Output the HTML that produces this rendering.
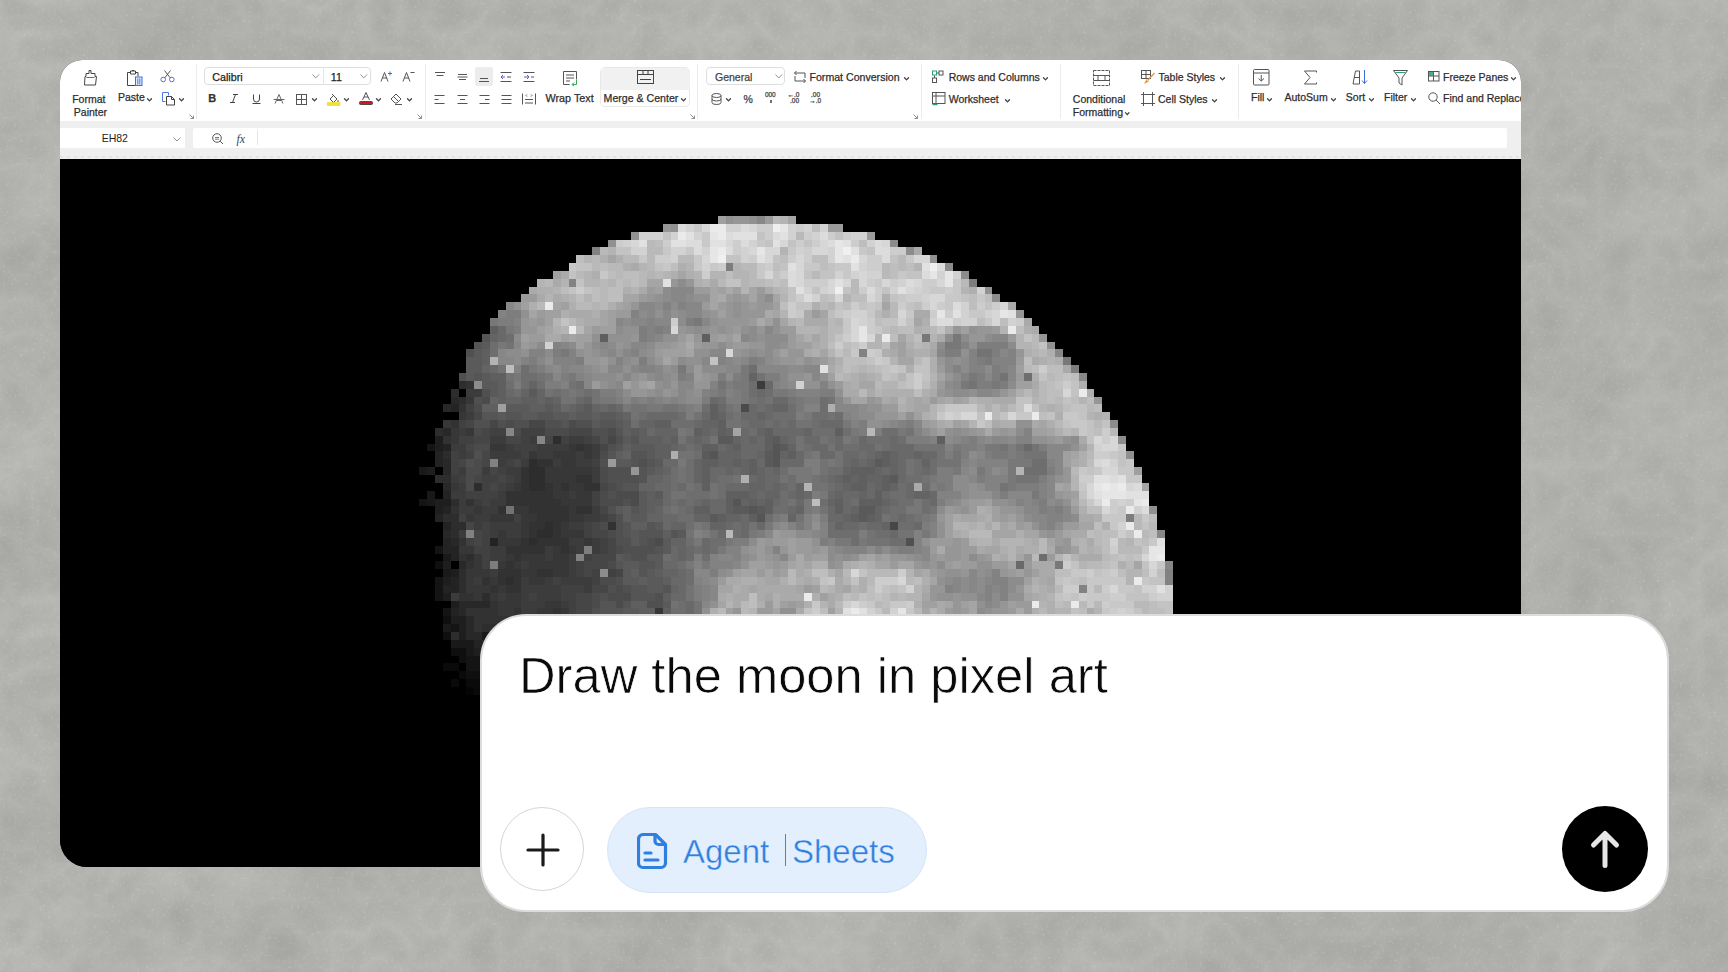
<!DOCTYPE html>
<html><head><meta charset="utf-8">
<style>
html,body{margin:0;padding:0;}
body{width:1728px;height:972px;overflow:hidden;position:relative;background:#b0b0ad;font-family:"Liberation Sans",sans-serif;}
#bg{position:absolute;left:0;top:0;width:1728px;height:972px;}
#win{position:absolute;left:60px;top:60px;width:1461px;height:807px;border-radius:22px 22px 27px 27px;overflow:hidden;background:#000;}
#ribbon{position:absolute;left:0;top:0;width:1461px;height:61px;background:#fff;}
#fbar{position:absolute;left:0;top:61px;width:1461px;height:38px;background:#efefef;}
#namebox{position:absolute;left:0;top:7px;width:125px;height:20px;background:#fff;}
#fbox{position:absolute;left:133px;top:7px;width:1314px;height:20px;border-radius:2px;background:#fff;}
#sheet{position:absolute;left:0;top:99px;width:1461px;height:708px;background:#000;}
#chat{position:absolute;left:480px;top:614px;width:1185px;height:294px;border:2px solid #dcdcdc;border-radius:46px;background:#fff;}
#prompt{position:absolute;left:37px;top:30.3px;font-size:50.7px;color:#0a0a0a;white-space:nowrap;-webkit-text-stroke:0.7px #fff;}
#plus{position:absolute;left:18px;top:191px;width:84px;height:84px;border:1px solid #d6d6d6;border-radius:50%;box-sizing:border-box;}
#pill{position:absolute;left:125px;top:191px;width:320px;height:86px;border-radius:43px;background:#e3effc;border:1px solid #d5e5f8;box-sizing:border-box;}
.t{position:absolute;white-space:nowrap;font-family:"Liberation Sans",sans-serif;}
#ribbon .t{-webkit-text-stroke:0.25px currentColor;}
.ic{position:absolute;overflow:visible;}
.sep{position:absolute;width:1px;background:#ececec;}
.box{position:absolute;box-sizing:border-box;}
#send{position:absolute;left:1080px;top:190px;width:86px;height:86px;border-radius:50%;background:#000;}
</style></head><body>
<svg id="bg" width="1728" height="972"><defs><filter id="cn" x="0" y="0" width="100%" height="100%" color-interpolation-filters="sRGB"><feTurbulence type="fractalNoise" baseFrequency="0.008 0.01" numOctaves="6" seed="11" result="n"/><feColorMatrix in="n" type="matrix" values="0.08 0 0 0 0.664  0.08 0 0 0 0.664  0.08 0 0 0 0.65  0 0 0 0 1"/></filter><filter id="cn2" x="0" y="0" width="100%" height="100%" color-interpolation-filters="sRGB"><feTurbulence type="turbulence" baseFrequency="0.03" numOctaves="3" seed="5" result="n"/><feColorMatrix in="n" type="matrix" values="0 0 0 0 0.555  0 0 0 0 0.555  0 0 0 0 0.54  0.35 0 0 0 -0.02"/></filter><filter id="gr" x="0" y="0" width="100%" height="100%" color-interpolation-filters="sRGB"><feTurbulence type="fractalNoise" baseFrequency="0.35" numOctaves="2" seed="3" result="n"/><feColorMatrix in="n" type="matrix" values="0 0 0 0 0.85  0 0 0 0 0.85  0 0 0 0 0.84  1.0 0 0 0 -0.6"/></filter></defs><rect width="1728" height="972" filter="url(#cn)"/><rect width="1728" height="972" filter="url(#cn2)"/><rect width="1728" height="972" filter="url(#gr)"/></svg>
<div id="win">
  <div id="ribbon">
<svg class="ic" style="left:22.0px;top:9.0px" width="16" height="17" viewBox="0 0 16 17" fill="none" stroke="#4a4a4a" stroke-width="1"><path d="M7 1.5 h2 v3 h4 v3 h1.5 l-1 8.5 h-11 l0.5 -8.5 h1 v-3 h3z" stroke="#444"/><path d="M4.5 8.5 h8" stroke="#d04040" stroke-width="1.2"/></svg>
<div class="t" style="left:12.2px;top:33.6px;font-size:10.5px;line-height:10.5px;color:#2e2e2e;">Format</div>
<div class="t" style="left:13.8px;top:46.9px;font-size:10.5px;line-height:10.5px;color:#2e2e2e;">Painter</div>
<svg class="ic" style="left:66.0px;top:9.0px" width="18" height="17" viewBox="0 0 18 17" fill="none" stroke="#4a4a4a" stroke-width="1"><path d="M4.5 3.5 h-3 v13 h8" stroke="#444"/><path d="M9.5 3.5 h2.5 v4" stroke="#444"/><path d="M4.5 2 h5 v3 h-5z" stroke="#444"/><path d="M6 1.5 h2" stroke="#444"/><rect x="9.5" y="8" width="6.5" height="8.5" stroke="#3b6fd8" fill="#e3eafc"/><path d="M11.8 9.5 v6 M13.8 9.5 v6" stroke="#3b6fd8" stroke-width="0.9"/></svg>
<div class="t" style="left:58.0px;top:32.4px;font-size:10.5px;line-height:10.5px;color:#2e2e2e;">Paste</div>
<svg class="ic" style="left:86.5px;top:38.3px" width="5" height="3.6" viewBox="0 0 5 3.6" fill="none" stroke="#4a4a4a" stroke-width="1"><path d="M0.5 0.7 L2.5 2.9000000000000004 L4.5 0.7" stroke="#444" stroke-width="1.3" stroke-linecap="round" stroke-linejoin="round"/></svg>
<svg class="ic" style="left:100.0px;top:10.0px" width="15" height="13" viewBox="0 0 15 13" fill="none" stroke="#4a4a4a" stroke-width="1"><circle cx="3.2" cy="9.5" r="2.3" stroke="#4a5fd0" stroke-width="0.9"/><circle cx="11.8" cy="9.5" r="2.3" stroke="#4a5fd0" stroke-width="0.9"/><path d="M4.8 7.8 L10.5 0.5 M10.2 7.8 L4.5 0.5" stroke="#444" stroke-width="0.9"/></svg>
<svg class="ic" style="left:101.0px;top:31.0px" width="15" height="15" viewBox="0 0 15 15" fill="none" stroke="#4a4a4a" stroke-width="1"><path d="M1.5 1.5 h6 v3 M1.5 1.5 v9 h3" stroke="#4a7be0"/><path d="M5.5 5.5 h5 l3 3 v5.5 h-8z M10.5 5.5 v3 h3" stroke="#444"/></svg>
<svg class="ic" style="left:119.0px;top:38.3px" width="5" height="3.6" viewBox="0 0 5 3.6" fill="none" stroke="#4a4a4a" stroke-width="1"><path d="M0.5 0.7 L2.5 2.9000000000000004 L4.5 0.7" stroke="#444" stroke-width="1.3" stroke-linecap="round" stroke-linejoin="round"/></svg>
<svg class="ic" style="left:129.0px;top:53.5px" width="5" height="5" viewBox="0 0 5 5" fill="none" stroke="#4a4a4a" stroke-width="1"><path d="M0.5 0.5 L4.5 4.5 M4.5 1.5 V4.5 H1.5" stroke="#777" stroke-width="0.8"/></svg>
<div class="sep" style="left:135.5px;top:4px;height:55px"></div>
<div class="box" style="left:143.7px;top:7.3px;width:167.0px;height:18.0px;border:1px solid #dedede;border-radius:4px;"></div>
<div class="sep" style="left:262.8px;top:8px;height:17px;background:#e6e6e6"></div>
<div class="t" style="left:152.3px;top:11.5px;font-size:10.7px;line-height:10.7px;color:#222;">Calibri</div>
<svg class="ic" style="left:251.5px;top:14.3px" width="7.5" height="4.5" viewBox="0 0 7.5 4.5" fill="none" stroke="#4a4a4a" stroke-width="1"><path d="M0.5 0.5 L3.75 4.0 L7.0 0.5" stroke="#888" stroke-width="0.9"/></svg>
<div class="t" style="left:270.8px;top:11.5px;font-size:10.7px;line-height:10.7px;color:#222;">11</div>
<svg class="ic" style="left:299.5px;top:14.3px" width="7.5" height="4.5" viewBox="0 0 7.5 4.5" fill="none" stroke="#4a4a4a" stroke-width="1"><path d="M0.5 0.5 L3.75 4.0 L7.0 0.5" stroke="#888" stroke-width="0.9"/></svg>
<svg class="ic" style="left:320.0px;top:11.0px" width="13" height="11" viewBox="0 0 13 11" fill="none" stroke="#4a4a4a" stroke-width="1"><path d="M1 10.5 L4.5 1.5 L8 10.5 M2.5 7 h4.5" stroke="#555"/><path d="M10 0.5 v4 M8 2.5 h4" stroke="#3b6fd8"/></svg>
<svg class="ic" style="left:342.0px;top:11.0px" width="13" height="11" viewBox="0 0 13 11" fill="none" stroke="#4a4a4a" stroke-width="1"><path d="M1 10.5 L4.5 1.5 L8 10.5 M2.5 7 h4.5" stroke="#555"/><path d="M8.5 1.5 h4" stroke="#555"/></svg>
<div class="t" style="left:148.3px;top:33.3px;font-size:11px;line-height:11px;color:#333;"><b>B</b></div>
<svg class="ic" style="left:169.0px;top:34.0px" width="10" height="9" viewBox="0 0 10 9" fill="none" stroke="#4a4a4a" stroke-width="1"><path d="M4 0.5 h5 M1 8.5 h5 M6.5 0.5 L3.5 8.5" stroke="#444"/></svg>
<svg class="ic" style="left:192.0px;top:34.0px" width="9" height="10" viewBox="0 0 9 10" fill="none" stroke="#4a4a4a" stroke-width="1"><path d="M1.5 0.5 v4.5 a3 3 0 0 0 6 0 v-4.5 M0.5 9.5 h8" stroke="#444"/></svg>
<svg class="ic" style="left:212.5px;top:34.0px" width="12" height="10" viewBox="0 0 12 10" fill="none" stroke="#4a4a4a" stroke-width="1"><path d="M2 9.5 L6 0.5 L10 9.5 M3.5 6.5 h5 M0.5 5.5 h11" stroke="#666"/></svg>
<svg class="ic" style="left:236.0px;top:33.5px" width="11" height="11" viewBox="0 0 11 11" fill="none" stroke="#4a4a4a" stroke-width="1"><rect x="0.5" y="0.5" width="10" height="10" stroke="#555"/><path d="M5.5 0.5 v10 M0.5 5.5 h10" stroke="#555"/></svg>
<svg class="ic" style="left:252.3px;top:38.1px" width="5" height="3.6" viewBox="0 0 5 3.6" fill="none" stroke="#4a4a4a" stroke-width="1"><path d="M0.5 0.7 L2.5 2.9000000000000004 L4.5 0.7" stroke="#444" stroke-width="1.3" stroke-linecap="round" stroke-linejoin="round"/></svg>
<svg class="ic" style="left:267.0px;top:32.5px" width="14" height="13" viewBox="0 0 14 13" fill="none" stroke="#4a4a4a" stroke-width="1"><path d="M3 6 L6.5 2.5 L10 6 L6.5 9.5z M5 1 L8 4" stroke="#555"/><path d="M11 7 v2" stroke="#555"/><rect x="0.5" y="9.5" width="12.5" height="3" fill="#f2e22a" stroke="#e5d300" stroke-width="0.5"/></svg>
<svg class="ic" style="left:283.5px;top:38.1px" width="5" height="3.6" viewBox="0 0 5 3.6" fill="none" stroke="#4a4a4a" stroke-width="1"><path d="M0.5 0.7 L2.5 2.9000000000000004 L4.5 0.7" stroke="#444" stroke-width="1.3" stroke-linecap="round" stroke-linejoin="round"/></svg>
<svg class="ic" style="left:298.5px;top:32.0px" width="14" height="13" viewBox="0 0 14 13" fill="none" stroke="#4a4a4a" stroke-width="1"><path d="M3.5 8 L7 0.5 L10.5 8 M5 5 h4" stroke="#555"/><rect x="0.5" y="9.5" width="13" height="3" fill="#d3171d" rx="1"/></svg>
<svg class="ic" style="left:315.5px;top:38.1px" width="5" height="3.6" viewBox="0 0 5 3.6" fill="none" stroke="#4a4a4a" stroke-width="1"><path d="M0.5 0.7 L2.5 2.9000000000000004 L4.5 0.7" stroke="#444" stroke-width="1.3" stroke-linecap="round" stroke-linejoin="round"/></svg>
<svg class="ic" style="left:330.0px;top:33.0px" width="13" height="12" viewBox="0 0 13 12" fill="none" stroke="#4a4a4a" stroke-width="1"><path d="M1 6 L6 1 L11 6 L7 10 h-2z M3.5 3.5 L8.5 8.5 M5 11.5 h7" stroke="#555"/></svg>
<svg class="ic" style="left:346.8px;top:38.1px" width="5" height="3.6" viewBox="0 0 5 3.6" fill="none" stroke="#4a4a4a" stroke-width="1"><path d="M0.5 0.7 L2.5 2.9000000000000004 L4.5 0.7" stroke="#444" stroke-width="1.3" stroke-linecap="round" stroke-linejoin="round"/></svg>
<svg class="ic" style="left:356.6px;top:53.5px" width="5" height="5" viewBox="0 0 5 5" fill="none" stroke="#4a4a4a" stroke-width="1"><path d="M0.5 0.5 L4.5 4.5 M4.5 1.5 V4.5 H1.5" stroke="#777" stroke-width="0.8"/></svg>
<div class="sep" style="left:364.5px;top:4px;height:55px"></div>
<svg class="ic" style="left:374.0px;top:11.0px" width="12" height="6" viewBox="0 0 12 6" fill="none" stroke="#4a4a4a" stroke-width="1"><path d="M1 1.5 h10 M2.5 4.5 h7" stroke="#555"/></svg>
<svg class="ic" style="left:396.5px;top:13.0px" width="11" height="8" viewBox="0 0 11 8" fill="none" stroke="#4a4a4a" stroke-width="1"><path d="M1 1.5 h9 M0.5 4 h10 M2 6.5 h7" stroke="#555"/></svg>
<div class="box" style="left:415.0px;top:7.0px;width:18.4px;height:18.5px;background:#ececec;border-radius:2px;"></div>
<svg class="ic" style="left:418.0px;top:16.0px" width="12" height="7" viewBox="0 0 12 7" fill="none" stroke="#4a4a4a" stroke-width="1"><path d="M2 2.5 h8 M1 5.5 h10" stroke="#555"/></svg>
<svg class="ic" style="left:440.0px;top:11.0px" width="12" height="12" viewBox="0 0 12 12" fill="none" stroke="#4a4a4a" stroke-width="1"><path d="M0.5 1.5 h11 M0.5 10.5 h11 M7 6 h4" stroke="#555"/><path d="M5 6 h-4 M3 4 L1 6 L3 8" stroke="#5b5bd8"/></svg>
<svg class="ic" style="left:462.5px;top:11.0px" width="12" height="12" viewBox="0 0 12 12" fill="none" stroke="#4a4a4a" stroke-width="1"><path d="M0.5 1.5 h11 M0.5 10.5 h11 M8 6 h3" stroke="#555"/><path d="M1 6 h5 M4 4 L6 6 L4 8" stroke="#5b5bd8"/></svg>
<svg class="ic" style="left:374.0px;top:33.5px" width="12" height="11" viewBox="0 0 12 11" fill="none" stroke="#4a4a4a" stroke-width="1"><path d="M0.5 1.5 h10 M0.5 5.5 h4 M0.5 9.5 h10" stroke="#555"/></svg>
<svg class="ic" style="left:396.5px;top:33.5px" width="12" height="11" viewBox="0 0 12 11" fill="none" stroke="#4a4a4a" stroke-width="1"><path d="M0.5 1.5 h10 M3 5.5 h5 M0.5 9.5 h10" stroke="#555"/></svg>
<svg class="ic" style="left:418.5px;top:33.5px" width="12" height="11" viewBox="0 0 12 11" fill="none" stroke="#4a4a4a" stroke-width="1"><path d="M0.5 1.5 h10 M6 5.5 h4.5 M0.5 9.5 h10" stroke="#555"/></svg>
<svg class="ic" style="left:440.5px;top:33.5px" width="12" height="11" viewBox="0 0 12 11" fill="none" stroke="#4a4a4a" stroke-width="1"><path d="M0.5 1.5 h10 M0.5 5.5 h10 M0.5 9.5 h10" stroke="#555"/></svg>
<svg class="ic" style="left:461.5px;top:33.0px" width="14" height="12" viewBox="0 0 14 12" fill="none" stroke="#4a4a4a" stroke-width="1"><path d="M0.5 0.5 v11 M13.5 0.5 v11 M3 6.5 h8 M3 10 h8 M5 3.5 L4 2.5 L5 1.5 M9 3.5 L10 2.5 L9 1.5" stroke="#555"/></svg>
<svg class="ic" style="left:501.5px;top:9.5px" width="17" height="17" viewBox="0 0 17 17" fill="none" stroke="#4a4a4a" stroke-width="1"><path d="M1.5 1.5 h13 v8 M1.5 1.5 v13 h6" stroke="#555"/><path d="M4 5 h8 M4 8 h8 M4 11 h4" stroke="#555"/><path d="M14.5 10 v4.5 h-4 M12 12.5 L10 14.5 L12 16" stroke="#3ba55b"/></svg>
<div class="t" style="left:485.5px;top:32.6px;font-size:10.8px;line-height:10.8px;color:#2e2e2e;">Wrap Text</div>
<div class="box" style="left:540.0px;top:7.0px;width:90.0px;height:40.0px;border:1px solid #e8e8e8;border-radius:5px;background:#fff;"></div>
<div class="box" style="left:540.5px;top:7.5px;width:89.0px;height:22.5px;background:#f1f1f1;border-radius:5px 5px 0 0;"></div>
<svg class="ic" style="left:576.5px;top:10.0px" width="17" height="14" viewBox="0 0 17 14" fill="none" stroke="#4a4a4a" stroke-width="1"><rect x="0.5" y="0.5" width="16" height="13" stroke="#444"/><path d="M0.5 4.5 h16 M6 0.5 v4 M11 0.5 v4 M3 9.5 h11" stroke="#444"/></svg>
<div class="t" style="left:543.6px;top:32.7px;font-size:10.6px;line-height:10.6px;color:#2e2e2e;">Merge &amp; Center</div>
<svg class="ic" style="left:621.1px;top:38.3px" width="5" height="3.6" viewBox="0 0 5 3.6" fill="none" stroke="#4a4a4a" stroke-width="1"><path d="M0.5 0.7 L2.5 2.9000000000000004 L4.5 0.7" stroke="#444" stroke-width="1.3" stroke-linecap="round" stroke-linejoin="round"/></svg>
<svg class="ic" style="left:630.0px;top:54.0px" width="5" height="5" viewBox="0 0 5 5" fill="none" stroke="#4a4a4a" stroke-width="1"><path d="M0.5 0.5 L4.5 4.5 M4.5 1.5 V4.5 H1.5" stroke="#777" stroke-width="0.8"/></svg>
<div class="sep" style="left:637.0px;top:4px;height:55px"></div>
<div class="box" style="left:645.6px;top:7.3px;width:79.9px;height:18.0px;border:1px solid #dedede;border-radius:4px;"></div>
<div class="t" style="left:655.0px;top:11.7px;font-size:10.5px;line-height:10.5px;color:#444;">General</div>
<svg class="ic" style="left:714.5px;top:14.3px" width="7.5" height="4.5" viewBox="0 0 7.5 4.5" fill="none" stroke="#4a4a4a" stroke-width="1"><path d="M0.5 0.5 L3.75 4.0 L7.0 0.5" stroke="#888" stroke-width="0.9"/></svg>
<svg class="ic" style="left:733.0px;top:10.0px" width="14" height="14" viewBox="0 0 14 14" fill="none" stroke="#4a4a4a" stroke-width="1"><path d="M3.5 1 L1.5 3 L3.5 5 M1.5 3 h10.5 v5 M10.5 13 L12.5 11 L10.5 9 M12.5 11 h-10.5 v-5" stroke="#555"/></svg>
<div class="t" style="left:749.5px;top:11.5px;font-size:10.6px;line-height:10.6px;color:#2e2e2e;">Format Conversion</div>
<svg class="ic" style="left:843.5px;top:16.8px" width="5" height="3.6" viewBox="0 0 5 3.6" fill="none" stroke="#4a4a4a" stroke-width="1"><path d="M0.5 0.7 L2.5 2.9000000000000004 L4.5 0.7" stroke="#444" stroke-width="1.3" stroke-linecap="round" stroke-linejoin="round"/></svg>
<svg class="ic" style="left:650.5px;top:33.0px" width="11" height="12" viewBox="0 0 11 12" fill="none" stroke="#4a4a4a" stroke-width="1"><ellipse cx="5.5" cy="2.5" rx="4.5" ry="2" stroke="#555"/><path d="M1 2.5 v7 M10 2.5 v7 M1 6 a4.5 2 0 0 0 9 0 M1 9.5 a4.5 2 0 0 0 9 0" stroke="#555"/></svg>
<svg class="ic" style="left:665.5px;top:37.8px" width="5" height="3.6" viewBox="0 0 5 3.6" fill="none" stroke="#4a4a4a" stroke-width="1"><path d="M0.5 0.7 L2.5 2.9000000000000004 L4.5 0.7" stroke="#444" stroke-width="1.3" stroke-linecap="round" stroke-linejoin="round"/></svg>
<div class="t" style="left:683.6px;top:34.1px;font-size:10.5px;line-height:10.5px;color:#444;">%</div>
<div class="t" style="left:704.9px;top:31.5px;font-size:6.5px;line-height:6.5px;color:#444;">000</div>
<svg class="ic" style="left:708.5px;top:39.5px" width="4" height="4" viewBox="0 0 4 4" fill="none" stroke="#4a4a4a" stroke-width="1"><path d="M2 0 v3" stroke="#444" stroke-width="1.5"/></svg>
<div class="t" style="left:727.5px;top:32.0px;font-size:6.5px;line-height:6.5px;color:#444;">&#8592;.0</div>
<div class="t" style="left:730.0px;top:38.0px;font-size:6.5px;line-height:6.5px;color:#444;">.00</div>
<div class="t" style="left:751.0px;top:32.0px;font-size:6.5px;line-height:6.5px;color:#444;">.00</div>
<div class="t" style="left:749.2px;top:38.0px;font-size:6.5px;line-height:6.5px;color:#444;">&#8594;.0</div>
<svg class="ic" style="left:853.3px;top:54.0px" width="5" height="5" viewBox="0 0 5 5" fill="none" stroke="#4a4a4a" stroke-width="1"><path d="M0.5 0.5 L4.5 4.5 M4.5 1.5 V4.5 H1.5" stroke="#777" stroke-width="0.8"/></svg>
<div class="sep" style="left:861.3px;top:4px;height:55px"></div>
<svg class="ic" style="left:871.5px;top:10.0px" width="14" height="14" viewBox="0 0 14 14" fill="none" stroke="#4a4a4a" stroke-width="1"><rect x="0.5" y="1" width="4" height="4" stroke="#2aa07a"/><rect x="7" y="1" width="4" height="4" stroke="#555"/><rect x="0.5" y="8" width="4" height="4.5" stroke="#555"/><path d="M5 3 h2 M2.5 5.5 v2.5" stroke="#555"/></svg>
<div class="t" style="left:888.7px;top:11.5px;font-size:10.5px;line-height:10.5px;color:#2e2e2e;">Rows and Columns</div>
<svg class="ic" style="left:983.2px;top:16.8px" width="5" height="3.6" viewBox="0 0 5 3.6" fill="none" stroke="#4a4a4a" stroke-width="1"><path d="M0.5 0.7 L2.5 2.9000000000000004 L4.5 0.7" stroke="#444" stroke-width="1.3" stroke-linecap="round" stroke-linejoin="round"/></svg>
<svg class="ic" style="left:871.5px;top:32.0px" width="14" height="14" viewBox="0 0 14 14" fill="none" stroke="#4a4a4a" stroke-width="1"><rect x="0.5" y="0.5" width="12.5" height="11" stroke="#555"/><path d="M0.5 4 h12.5 M4 0.5 v11" stroke="#555"/><path d="M0.5 12.5 h5" stroke="#2aa07a" stroke-width="1.5"/></svg>
<div class="t" style="left:888.7px;top:33.7px;font-size:10.5px;line-height:10.5px;color:#2e2e2e;">Worksheet</div>
<svg class="ic" style="left:944.5px;top:38.8px" width="5" height="3.6" viewBox="0 0 5 3.6" fill="none" stroke="#4a4a4a" stroke-width="1"><path d="M0.5 0.7 L2.5 2.9000000000000004 L4.5 0.7" stroke="#444" stroke-width="1.3" stroke-linecap="round" stroke-linejoin="round"/></svg>
<div class="sep" style="left:1000.0px;top:4px;height:55px"></div>
<svg class="ic" style="left:1032.5px;top:9.5px" width="17" height="16" viewBox="0 0 17 16" fill="none" stroke="#4a4a4a" stroke-width="1"><rect x="0.5" y="0.5" width="16" height="15" stroke="#555" stroke-dasharray="3 1"/><path d="M0.5 5.5 h16 M0.5 10.5 h16 M5 5.5 v5 M12 5.5 v5" stroke="#555"/></svg>
<div class="t" style="left:1012.8px;top:34.1px;font-size:10.5px;line-height:10.5px;color:#2e2e2e;">Conditional</div>
<div class="t" style="left:1012.8px;top:46.6px;font-size:10.5px;line-height:10.5px;color:#2e2e2e;">Formatting</div>
<svg class="ic" style="left:1065.1px;top:52.3px" width="4.5" height="3.4" viewBox="0 0 4.5 3.4" fill="none" stroke="#4a4a4a" stroke-width="1"><path d="M0.5 0.7 L2.25 2.7 L4.0 0.7" stroke="#444" stroke-width="1.3" stroke-linecap="round" stroke-linejoin="round"/></svg>
<svg class="ic" style="left:1081.0px;top:9.5px" width="15" height="14" viewBox="0 0 15 14" fill="none" stroke="#4a4a4a" stroke-width="1"><rect x="0.5" y="0.5" width="9" height="8" stroke="#555"/><path d="M0.5 4.5 h9 M5 0.5 v8" stroke="#555"/><path d="M13.5 3 L7 10 M6 9.5 L4.5 12.5 L7.5 11" stroke="#e8923a" stroke-width="1.3"/></svg>
<div class="t" style="left:1098.5px;top:11.5px;font-size:10.5px;line-height:10.5px;color:#2e2e2e;">Table Styles</div>
<svg class="ic" style="left:1159.5px;top:16.8px" width="5" height="3.6" viewBox="0 0 5 3.6" fill="none" stroke="#4a4a4a" stroke-width="1"><path d="M0.5 0.7 L2.5 2.9000000000000004 L4.5 0.7" stroke="#444" stroke-width="1.3" stroke-linecap="round" stroke-linejoin="round"/></svg>
<svg class="ic" style="left:1081.0px;top:32.0px" width="14" height="14" viewBox="0 0 14 14" fill="none" stroke="#4a4a4a" stroke-width="1"><path d="M2.5 0 v14 M11.5 0 v14 M0 2.5 h14 M0 11.5 h14" stroke="#555"/></svg>
<div class="t" style="left:1098.0px;top:33.7px;font-size:10.5px;line-height:10.5px;color:#2e2e2e;">Cell Styles</div>
<svg class="ic" style="left:1152.1px;top:38.8px" width="5" height="3.6" viewBox="0 0 5 3.6" fill="none" stroke="#4a4a4a" stroke-width="1"><path d="M0.5 0.7 L2.5 2.9000000000000004 L4.5 0.7" stroke="#444" stroke-width="1.3" stroke-linecap="round" stroke-linejoin="round"/></svg>
<div class="sep" style="left:1178.0px;top:4px;height:55px"></div>
<svg class="ic" style="left:1192.5px;top:9.0px" width="17" height="17" viewBox="0 0 17 17" fill="none" stroke="#4a4a4a" stroke-width="1"><rect x="0.5" y="0.5" width="15.5" height="15.5" rx="1" stroke="#555"/><path d="M0.5 4 h15.5 M8.25 6 v6 M5.5 9.5 L8.25 12 L11 9.5" stroke="#555"/></svg>
<div class="t" style="left:1191.0px;top:32.2px;font-size:10.5px;line-height:10.5px;color:#2e2e2e;">Fill</div>
<svg class="ic" style="left:1206.5px;top:37.8px" width="5" height="3.6" viewBox="0 0 5 3.6" fill="none" stroke="#4a4a4a" stroke-width="1"><path d="M0.5 0.7 L2.5 2.9000000000000004 L4.5 0.7" stroke="#444" stroke-width="1.3" stroke-linecap="round" stroke-linejoin="round"/></svg>
<svg class="ic" style="left:1242.5px;top:9.5px" width="15" height="15" viewBox="0 0 15 15" fill="none" stroke="#4a4a4a" stroke-width="1"><path d="M13.5 2.5 v-1.5 h-12 L7 7.5 L1.5 14 h12 v-1.5" stroke="#555" fill="none"/></svg>
<div class="t" style="left:1224.5px;top:32.2px;font-size:10.5px;line-height:10.5px;color:#2e2e2e;">AutoSum</div>
<svg class="ic" style="left:1271.0px;top:37.8px" width="5" height="3.6" viewBox="0 0 5 3.6" fill="none" stroke="#4a4a4a" stroke-width="1"><path d="M0.5 0.7 L2.5 2.9000000000000004 L4.5 0.7" stroke="#444" stroke-width="1.3" stroke-linecap="round" stroke-linejoin="round"/></svg>
<svg class="ic" style="left:1291.5px;top:9.0px" width="17" height="17" viewBox="0 0 17 17" fill="none" stroke="#4a4a4a" stroke-width="1"><path d="M1 15 L3.5 2 h4 v13 h-6.5z M2 8.5 h5.5" stroke="#555"/><path d="M12.5 1 v13.5 M10 11.5 L12.5 14.5 L15 11.5" stroke="#3b6fd8"/></svg>
<div class="t" style="left:1285.8px;top:32.2px;font-size:10.5px;line-height:10.5px;color:#2e2e2e;">Sort</div>
<svg class="ic" style="left:1308.5px;top:37.8px" width="5" height="3.6" viewBox="0 0 5 3.6" fill="none" stroke="#4a4a4a" stroke-width="1"><path d="M0.5 0.7 L2.5 2.9000000000000004 L4.5 0.7" stroke="#444" stroke-width="1.3" stroke-linecap="round" stroke-linejoin="round"/></svg>
<svg class="ic" style="left:1332.5px;top:9.5px" width="15" height="16" viewBox="0 0 15 16" fill="none" stroke="#4a4a4a" stroke-width="1"><path d="M0.5 0.5 h14 L9 8 v7 L6 13 v-5z" stroke="#555"/><path d="M2.5 2.5 h10" stroke="#2aa07a"/></svg>
<div class="t" style="left:1324.0px;top:32.2px;font-size:10.5px;line-height:10.5px;color:#2e2e2e;">Filter</div>
<svg class="ic" style="left:1350.5px;top:37.8px" width="5" height="3.6" viewBox="0 0 5 3.6" fill="none" stroke="#4a4a4a" stroke-width="1"><path d="M0.5 0.7 L2.5 2.9000000000000004 L4.5 0.7" stroke="#444" stroke-width="1.3" stroke-linecap="round" stroke-linejoin="round"/></svg>
<svg class="ic" style="left:1367.5px;top:11.0px" width="12" height="11" viewBox="0 0 12 11" fill="none" stroke="#4a4a4a" stroke-width="1"><rect x="0.5" y="0.5" width="10.5" height="9.5" stroke="#555"/><path d="M0.5 5 h10.5 M5.5 0.5 v9.5" stroke="#555"/><rect x="1" y="1" width="4.5" height="4" fill="#2aa07a" stroke="none" opacity="0.85"/></svg>
<div class="t" style="left:1383.0px;top:11.6px;font-size:10.5px;line-height:10.5px;color:#2e2e2e;">Freeze Panes</div>
<svg class="ic" style="left:1450.5px;top:16.8px" width="5" height="3.6" viewBox="0 0 5 3.6" fill="none" stroke="#4a4a4a" stroke-width="1"><path d="M0.5 0.7 L2.5 2.9000000000000004 L4.5 0.7" stroke="#444" stroke-width="1.3" stroke-linecap="round" stroke-linejoin="round"/></svg>
<svg class="ic" style="left:1367.5px;top:32.0px" width="13" height="13" viewBox="0 0 13 13" fill="none" stroke="#4a4a4a" stroke-width="1"><circle cx="5" cy="5" r="4.2" stroke="#555"/><path d="M8 8 L12 12" stroke="#555"/></svg>
<div class="t" style="left:1383.0px;top:33.1px;font-size:10.5px;line-height:10.5px;color:#2e2e2e;">Find and Replace</div>
</div>
  <div id="fbar"><div id="namebox"><div class="t" style="left:41.7px;top:5px;font-size:10.5px;line-height:10.5px;color:#222;">EH82</div><svg class="ic" style="left:113px;top:8.5px" width="8" height="5"><path d="M0.5 0.5 L4 4 L7.5 0.5" stroke="#888" fill="none" stroke-width="0.9"/></svg></div><div id="fbox"><svg class="ic" style="left:18.5px;top:5px" width="12" height="12" fill="none"><circle cx="5" cy="5" r="4.3" stroke="#555"/><path d="M3 4.5 h4 M3 6.2 h4" stroke="#555" stroke-width="0.8"/><path d="M8.2 8.2 L11 11" stroke="#555"/></svg><div class="t" style="left:43.5px;top:5px;font-size:12px;line-height:12px;color:#444;font-family:'Liberation Serif',serif;font-style:italic;">fx</div><div class="sep" style="left:64px;top:2px;height:15px;background:#e6e6e6"></div></div><div style="position:absolute;left:0;top:35px;width:1461px;height:2px;background:repeating-linear-gradient(90deg,#dedede 0 3px,transparent 3px 7px);opacity:0.7"></div></div>
  <div id="sheet"></div>
<svg id="moon" width="863.50" height="659.40" viewBox="0 0 110 84" shape-rendering="crispEdges" style="position:absolute;left:272.60px;top:156.20px"><path fill="rgb(5,5,5)" d="M17 60h1v1h-1zM36 61h3v1h-3zM40 61h2v1h-2zM81 61h1v1h-1z"/><path fill="rgb(10,10,10)" d="M14 57h2v1h-2zM16 58h1v1h-1zM15 59h1v1h-1zM17 59h2v1h-2zM18 60h6v1h-6zM25 60h10v1h-10zM26 61h1v1h-1zM43 61h9v1h-9zM77 61h4v1h-4zM82 61h5v1h-5zM88 61h1v1h-1z"/><path fill="rgb(15,15,15)" d="M13 44h1v1h-1zM14 51h1v1h-1zM14 53h1v1h-1zM15 55h2v1h-2zM16 56h1v1h-1zM17 58h2v1h-2zM20 58h2v1h-2zM19 59h13v1h-13zM35 60h7v1h-7zM42 61h1v1h-1zM52 61h25v1h-25zM87 61h1v1h-1zM89 61h18v1h-18z"/><path fill="rgb(20,20,20)" d="M12 29h1v1h-1zM11 36h1v1h-1zM13 42h1v1h-1zM13 46h1v1h-1zM13 47h1v1h-1zM13 48h1v1h-1zM14 50h1v1h-1zM15 52h1v1h-1zM17 56h2v1h-2zM17 57h2v1h-2zM21 57h2v1h-2zM19 58h1v1h-1zM22 58h9v1h-9zM32 59h9v1h-9zM24 60h1v1h-1zM42 60h6v1h-6zM57 60h1v1h-1zM81 60h1v1h-1zM85 60h1v1h-1z"/><path fill="rgb(25,25,25)" d="M11 32h1v1h-1zM12 35h1v1h-1zM12 36h1v1h-1zM14 43h1v1h-1zM14 45h1v1h-1zM14 52h1v1h-1zM19 53h1v1h-1zM15 54h3v1h-3zM17 55h1v1h-1zM20 55h1v1h-1zM19 56h5v1h-5zM19 57h2v1h-2zM23 57h5v1h-5zM31 58h8v1h-8zM40 58h1v1h-1zM41 59h3v1h-3zM79 59h1v1h-1zM48 60h6v1h-6zM77 60h4v1h-4zM82 60h3v1h-3zM86 60h3v1h-3z"/><path fill="rgb(30,30,30)" d="M13 28h1v1h-1zM13 29h1v1h-1zM12 32h1v1h-1zM13 36h2v1h-2zM13 37h1v1h-1zM14 44h1v1h-1zM15 45h1v1h-1zM14 46h1v1h-1zM14 48h1v1h-1zM15 49h1v1h-1zM15 51h2v1h-2zM16 52h1v1h-1zM16 53h1v1h-1zM18 55h2v1h-2zM21 55h3v1h-3zM24 56h4v1h-4zM28 57h9v1h-9zM40 57h1v1h-1zM39 58h1v1h-1zM41 58h1v1h-1zM44 59h1v1h-1zM54 60h2v1h-2zM58 60h9v1h-9zM70 60h3v1h-3zM74 60h3v1h-3zM89 60h11v1h-11zM102 60h1v1h-1z"/><path fill="rgb(35,35,35)" d="M15 24h1v1h-1zM14 29h1v1h-1zM13 30h1v1h-1zM13 31h1v1h-1zM14 35h1v1h-1zM14 37h1v1h-1zM13 38h1v1h-1zM14 39h1v1h-1zM14 41h1v1h-1zM20 41h1v1h-1zM14 42h2v1h-2zM15 43h1v1h-1zM15 46h1v1h-1zM14 47h2v1h-2zM15 50h1v1h-1zM32 52h1v1h-1zM18 54h1v1h-1zM22 54h1v1h-1zM34 54h1v1h-1zM24 55h1v1h-1zM27 55h3v1h-3zM28 56h2v1h-2zM35 56h1v1h-1zM37 57h3v1h-3zM42 58h3v1h-3zM45 59h4v1h-4zM80 59h5v1h-5zM86 59h2v1h-2zM56 60h1v1h-1zM67 60h1v1h-1zM69 60h1v1h-1zM73 60h1v1h-1zM100 60h2v1h-2zM103 60h4v1h-4z"/><path fill="rgb(40,40,40)" d="M15 23h1v1h-1zM14 24h1v1h-1zM14 27h1v1h-1zM14 31h1v1h-1zM14 32h1v1h-1zM14 34h1v1h-1zM14 40h1v1h-1zM15 41h1v1h-1zM16 44h1v1h-1zM16 49h4v1h-4zM16 50h1v1h-1zM17 51h1v1h-1zM17 52h1v1h-1zM17 53h2v1h-2zM20 53h1v1h-1zM29 53h1v1h-1zM19 54h3v1h-3zM23 54h2v1h-2zM26 54h2v1h-2zM29 54h2v1h-2zM25 55h2v1h-2zM30 55h2v1h-2zM30 56h5v1h-5zM41 57h3v1h-3zM45 58h2v1h-2zM49 59h1v1h-1zM70 59h1v1h-1zM77 59h2v1h-2zM85 59h1v1h-1zM88 59h2v1h-2zM91 59h1v1h-1zM68 60h1v1h-1z"/><path fill="rgb(45,45,45)" d="M16 21h1v1h-1zM15 22h1v1h-1zM16 23h1v1h-1zM13 27h1v1h-1zM28 28h1v1h-1zM14 30h1v1h-1zM25 31h1v1h-1zM25 32h2v1h-2zM13 33h2v1h-2zM25 33h2v1h-2zM18 34h1v1h-1zM25 34h2v1h-2zM15 36h1v1h-1zM14 38h2v1h-2zM15 39h2v1h-2zM27 39h1v1h-1zM15 40h1v1h-1zM26 40h2v1h-2zM25 41h1v1h-1zM17 43h1v1h-1zM16 45h1v1h-1zM16 46h1v1h-1zM22 46h1v1h-1zM16 47h1v1h-1zM19 48h1v1h-1zM19 52h2v1h-2zM28 52h2v1h-2zM34 52h1v1h-1zM15 53h1v1h-1zM21 53h3v1h-3zM30 53h1v1h-1zM25 54h1v1h-1zM31 54h1v1h-1zM35 55h2v1h-2zM36 56h1v1h-1zM39 56h4v1h-4zM46 56h1v1h-1zM44 57h2v1h-2zM47 58h1v1h-1zM83 58h1v1h-1zM50 59h2v1h-2zM53 59h3v1h-3zM58 59h3v1h-3zM64 59h2v1h-2zM69 59h1v1h-1zM71 59h1v1h-1zM73 59h4v1h-4zM90 59h1v1h-1zM92 59h4v1h-4zM97 59h1v1h-1zM99 59h1v1h-1zM103 59h1v1h-1z"/><path fill="rgb(50,50,50)" d="M17 21h1v1h-1zM16 24h1v1h-1zM15 26h1v1h-1zM14 28h1v1h-1zM31 29h1v1h-1zM26 31h2v1h-2zM24 32h1v1h-1zM24 33h1v1h-1zM31 33h2v1h-2zM24 34h1v1h-1zM27 34h1v1h-1zM29 34h1v1h-1zM32 34h2v1h-2zM22 35h6v1h-6zM17 36h1v1h-1zM22 36h7v1h-7zM15 37h1v1h-1zM21 37h1v1h-1zM25 37h5v1h-5zM31 37h2v1h-2zM26 38h4v1h-4zM25 39h2v1h-2zM28 39h1v1h-1zM35 39h1v1h-1zM25 40h1v1h-1zM28 40h1v1h-1zM16 41h1v1h-1zM24 41h1v1h-1zM26 41h4v1h-4zM22 42h5v1h-5zM29 42h1v1h-1zM16 43h1v1h-1zM23 43h1v1h-1zM17 44h1v1h-1zM22 44h1v1h-1zM21 45h3v1h-3zM26 45h2v1h-2zM19 46h1v1h-1zM21 46h1v1h-1zM23 46h1v1h-1zM20 47h1v1h-1zM22 47h2v1h-2zM16 48h2v1h-2zM20 49h1v1h-1zM17 50h4v1h-4zM23 50h1v1h-1zM28 50h1v1h-1zM18 51h5v1h-5zM27 51h2v1h-2zM18 52h1v1h-1zM21 52h4v1h-4zM26 52h1v1h-1zM30 52h1v1h-1zM24 53h3v1h-3zM28 53h1v1h-1zM31 53h1v1h-1zM32 54h1v1h-1zM35 54h1v1h-1zM32 55h3v1h-3zM37 55h1v1h-1zM42 55h1v1h-1zM37 56h2v1h-2zM43 56h1v1h-1zM76 57h1v1h-1zM78 58h5v1h-5zM84 58h4v1h-4zM52 59h1v1h-1zM56 59h2v1h-2zM61 59h3v1h-3zM66 59h2v1h-2zM72 59h1v1h-1zM96 59h1v1h-1zM98 59h1v1h-1zM100 59h3v1h-3zM104 59h2v1h-2z"/><path fill="rgb(55,55,55)" d="M17 23h1v1h-1zM16 25h1v1h-1zM14 26h1v1h-1zM15 27h1v1h-1zM17 27h1v1h-1zM15 28h1v1h-1zM20 29h2v1h-2zM30 29h1v1h-1zM32 29h1v1h-1zM25 30h1v1h-1zM28 30h3v1h-3zM32 30h1v1h-1zM29 31h2v1h-2zM27 32h6v1h-6zM27 33h4v1h-4zM15 34h1v1h-1zM23 34h1v1h-1zM28 34h1v1h-1zM30 34h2v1h-2zM28 35h2v1h-2zM31 35h2v1h-2zM29 36h4v1h-4zM18 37h1v1h-1zM23 37h2v1h-2zM30 37h1v1h-1zM17 38h1v1h-1zM20 38h3v1h-3zM24 38h2v1h-2zM30 38h2v1h-2zM24 39h1v1h-1zM29 39h1v1h-1zM21 40h1v1h-1zM24 40h1v1h-1zM29 40h3v1h-3zM21 41h3v1h-3zM32 41h1v1h-1zM16 42h2v1h-2zM28 42h1v1h-1zM30 42h1v1h-1zM18 43h1v1h-1zM22 43h1v1h-1zM24 43h3v1h-3zM28 43h2v1h-2zM18 44h1v1h-1zM21 44h1v1h-1zM23 44h1v1h-1zM25 44h5v1h-5zM17 45h3v1h-3zM24 45h2v1h-2zM28 45h2v1h-2zM17 46h1v1h-1zM20 46h1v1h-1zM25 46h2v1h-2zM17 47h3v1h-3zM21 47h1v1h-1zM18 48h1v1h-1zM20 48h1v1h-1zM22 48h2v1h-2zM21 49h3v1h-3zM27 49h2v1h-2zM21 50h2v1h-2zM26 50h2v1h-2zM29 50h1v1h-1zM41 50h1v1h-1zM23 51h1v1h-1zM26 51h1v1h-1zM29 51h1v1h-1zM25 52h1v1h-1zM27 52h1v1h-1zM31 52h1v1h-1zM27 53h1v1h-1zM32 53h1v1h-1zM36 53h1v1h-1zM33 54h1v1h-1zM36 54h1v1h-1zM38 55h2v1h-2zM43 55h1v1h-1zM46 57h2v1h-2zM83 57h2v1h-2zM70 58h1v1h-1zM74 58h1v1h-1zM88 58h3v1h-3zM68 59h1v1h-1zM106 59h1v1h-1z"/><path fill="rgb(60,60,60)" d="M54 21h1v1h-1zM17 22h2v1h-2zM17 25h1v1h-1zM16 27h1v1h-1zM20 28h2v1h-2zM25 28h1v1h-1zM30 28h2v1h-2zM15 29h2v1h-2zM22 29h1v1h-1zM26 29h4v1h-4zM33 29h1v1h-1zM16 30h1v1h-1zM20 30h4v1h-4zM26 30h2v1h-2zM31 30h1v1h-1zM33 30h1v1h-1zM21 31h1v1h-1zM24 31h1v1h-1zM28 31h1v1h-1zM31 31h2v1h-2zM16 32h1v1h-1zM19 32h1v1h-1zM22 32h2v1h-2zM33 32h1v1h-1zM15 33h1v1h-1zM23 33h1v1h-1zM33 33h1v1h-1zM16 34h1v1h-1zM22 34h1v1h-1zM15 35h2v1h-2zM21 35h1v1h-1zM30 35h1v1h-1zM16 36h1v1h-1zM18 36h1v1h-1zM20 36h2v1h-2zM16 37h2v1h-2zM19 37h2v1h-2zM33 37h1v1h-1zM18 38h2v1h-2zM32 38h2v1h-2zM18 39h1v1h-1zM20 39h4v1h-4zM30 39h2v1h-2zM16 40h1v1h-1zM20 40h1v1h-1zM22 40h2v1h-2zM30 41h2v1h-2zM33 41h1v1h-1zM20 42h2v1h-2zM27 42h1v1h-1zM31 42h1v1h-1zM33 42h1v1h-1zM20 43h2v1h-2zM27 43h1v1h-1zM30 43h1v1h-1zM24 44h1v1h-1zM30 44h1v1h-1zM20 45h1v1h-1zM30 45h1v1h-1zM18 46h1v1h-1zM24 46h1v1h-1zM27 46h1v1h-1zM29 46h4v1h-4zM24 47h5v1h-5zM32 47h1v1h-1zM15 48h1v1h-1zM21 48h1v1h-1zM24 48h1v1h-1zM26 48h3v1h-3zM24 49h3v1h-3zM29 49h1v1h-1zM24 50h2v1h-2zM24 51h2v1h-2zM30 51h1v1h-1zM35 52h1v1h-1zM33 53h1v1h-1zM35 53h1v1h-1zM37 53h1v1h-1zM37 54h2v1h-2zM40 55h2v1h-2zM44 56h2v1h-2zM79 57h1v1h-1zM81 57h2v1h-2zM49 58h1v1h-1zM52 58h1v1h-1zM54 58h3v1h-3zM61 58h1v1h-1zM63 58h2v1h-2zM71 58h1v1h-1zM73 58h1v1h-1zM75 58h2v1h-2zM91 58h1v1h-1zM93 58h2v1h-2z"/><path fill="rgb(65,65,65)" d="M17 24h1v1h-1zM16 26h1v1h-1zM20 27h2v1h-2zM24 27h3v1h-3zM16 28h2v1h-2zM24 28h1v1h-1zM29 28h1v1h-1zM32 28h1v1h-1zM23 29h3v1h-3zM15 30h1v1h-1zM17 30h1v1h-1zM24 30h1v1h-1zM15 31h1v1h-1zM22 31h1v1h-1zM33 31h1v1h-1zM15 32h1v1h-1zM21 32h1v1h-1zM16 33h1v1h-1zM19 33h2v1h-2zM22 33h1v1h-1zM19 34h1v1h-1zM21 34h1v1h-1zM17 35h4v1h-4zM33 35h1v1h-1zM19 36h1v1h-1zM33 36h1v1h-1zM16 38h1v1h-1zM23 38h1v1h-1zM34 38h1v1h-1zM19 39h1v1h-1zM32 39h1v1h-1zM19 40h1v1h-1zM32 40h1v1h-1zM17 41h1v1h-1zM19 41h1v1h-1zM34 41h1v1h-1zM18 42h2v1h-2zM34 42h1v1h-1zM19 43h1v1h-1zM32 43h1v1h-1zM19 44h1v1h-1zM31 44h1v1h-1zM31 45h1v1h-1zM33 45h1v1h-1zM35 45h1v1h-1zM28 46h1v1h-1zM33 46h1v1h-1zM29 47h3v1h-3zM25 48h1v1h-1zM29 48h2v1h-2zM30 49h1v1h-1zM30 50h1v1h-1zM31 51h2v1h-2zM37 52h1v1h-1zM34 53h1v1h-1zM39 54h1v1h-1zM42 54h2v1h-2zM44 55h1v1h-1zM48 57h1v1h-1zM78 57h1v1h-1zM80 57h1v1h-1zM85 57h3v1h-3zM50 58h1v1h-1zM53 58h1v1h-1zM57 58h1v1h-1zM59 58h2v1h-2zM62 58h1v1h-1zM69 58h1v1h-1zM72 58h1v1h-1zM92 58h1v1h-1zM98 58h3v1h-3zM102 58h4v1h-4z"/><path fill="rgb(70,70,70)" d="M18 25h1v1h-1zM17 26h1v1h-1zM20 26h1v1h-1zM25 26h2v1h-2zM19 27h1v1h-1zM30 27h3v1h-3zM18 28h2v1h-2zM22 28h2v1h-2zM27 28h1v1h-1zM33 28h1v1h-1zM35 28h1v1h-1zM17 29h1v1h-1zM34 29h1v1h-1zM19 30h1v1h-1zM16 31h1v1h-1zM19 31h1v1h-1zM23 31h1v1h-1zM20 32h1v1h-1zM18 33h1v1h-1zM21 33h1v1h-1zM20 34h1v1h-1zM34 34h1v1h-1zM34 37h1v1h-1zM35 38h1v1h-1zM17 39h1v1h-1zM33 39h1v1h-1zM71 39h1v1h-1zM18 40h1v1h-1zM33 40h2v1h-2zM18 41h1v1h-1zM35 41h1v1h-1zM35 42h1v1h-1zM33 43h3v1h-3zM32 44h3v1h-3zM32 45h1v1h-1zM36 45h1v1h-1zM33 47h2v1h-2zM31 48h2v1h-2zM31 49h2v1h-2zM31 50h2v1h-2zM33 52h1v1h-1zM36 52h1v1h-1zM38 52h1v1h-1zM38 53h2v1h-2zM40 54h1v1h-1zM44 54h2v1h-2zM45 55h1v1h-1zM82 56h3v1h-3zM54 57h1v1h-1zM56 57h1v1h-1zM77 57h1v1h-1zM104 57h1v1h-1zM66 58h2v1h-2zM95 58h3v1h-3zM101 58h1v1h-1zM106 58h1v1h-1z"/><path fill="rgb(75,75,75)" d="M19 23h1v1h-1zM18 24h1v1h-1zM52 24h1v1h-1zM22 26h1v1h-1zM30 26h1v1h-1zM18 27h1v1h-1zM23 27h1v1h-1zM27 27h3v1h-3zM35 27h1v1h-1zM18 29h2v1h-2zM34 30h1v1h-1zM18 31h1v1h-1zM17 32h2v1h-2zM34 32h1v1h-1zM17 33h1v1h-1zM34 33h1v1h-1zM17 34h1v1h-1zM35 34h1v1h-1zM34 35h1v1h-1zM36 35h3v1h-3zM34 36h3v1h-3zM38 36h1v1h-1zM34 39h1v1h-1zM35 40h1v1h-1zM41 41h1v1h-1zM36 42h1v1h-1zM35 44h1v1h-1zM34 46h2v1h-2zM36 47h1v1h-1zM33 48h1v1h-1zM35 48h3v1h-3zM33 49h1v1h-1zM36 49h1v1h-1zM33 51h1v1h-1zM35 51h1v1h-1zM40 53h1v1h-1zM43 53h1v1h-1zM41 54h1v1h-1zM82 55h1v1h-1zM84 55h1v1h-1zM47 56h2v1h-2zM78 56h1v1h-1zM80 56h2v1h-2zM85 56h2v1h-2zM49 57h1v1h-1zM53 57h1v1h-1zM55 57h1v1h-1zM57 57h1v1h-1zM60 57h2v1h-2zM63 57h2v1h-2zM70 57h1v1h-1zM88 57h1v1h-1zM90 57h2v1h-2zM103 57h1v1h-1zM48 58h1v1h-1zM68 58h1v1h-1z"/><path fill="rgb(80,80,80)" d="M17 17h1v1h-1zM16 20h1v1h-1zM19 22h1v1h-1zM18 23h1v1h-1zM18 26h2v1h-2zM21 26h1v1h-1zM23 26h2v1h-2zM27 26h2v1h-2zM31 26h2v1h-2zM33 27h2v1h-2zM34 28h1v1h-1zM36 28h1v1h-1zM35 29h1v1h-1zM18 30h1v1h-1zM17 31h1v1h-1zM34 31h1v1h-1zM39 31h1v1h-1zM35 32h3v1h-3zM35 33h4v1h-4zM36 34h1v1h-1zM35 35h1v1h-1zM37 36h1v1h-1zM35 37h1v1h-1zM36 38h1v1h-1zM36 39h1v1h-1zM36 40h1v1h-1zM36 41h2v1h-2zM40 41h1v1h-1zM73 41h1v1h-1zM37 42h4v1h-4zM38 43h2v1h-2zM36 46h1v1h-1zM35 47h1v1h-1zM37 47h1v1h-1zM34 48h1v1h-1zM41 48h1v1h-1zM40 49h2v1h-2zM33 50h1v1h-1zM34 51h1v1h-1zM36 51h1v1h-1zM38 51h1v1h-1zM41 53h2v1h-2zM44 53h1v1h-1zM46 54h1v1h-1zM46 55h1v1h-1zM83 55h1v1h-1zM49 56h1v1h-1zM57 56h1v1h-1zM79 56h1v1h-1zM87 56h1v1h-1zM50 57h3v1h-3zM58 57h2v1h-2zM62 57h1v1h-1zM69 57h1v1h-1zM71 57h5v1h-5zM89 57h1v1h-1zM93 57h2v1h-2zM99 57h1v1h-1zM102 57h1v1h-1zM105 57h1v1h-1zM51 58h1v1h-1zM58 58h1v1h-1zM65 58h1v1h-1zM77 58h1v1h-1z"/><path fill="rgb(85,85,85)" d="M19 15h1v1h-1zM18 16h1v1h-1zM18 20h1v1h-1zM19 25h2v1h-2zM22 25h2v1h-2zM26 25h2v1h-2zM29 26h1v1h-1zM34 26h2v1h-2zM36 27h1v1h-1zM38 28h1v1h-1zM36 29h1v1h-1zM56 29h1v1h-1zM35 30h1v1h-1zM38 30h2v1h-2zM48 30h1v1h-1zM56 30h1v1h-1zM38 31h1v1h-1zM40 31h1v1h-1zM56 31h1v1h-1zM39 32h1v1h-1zM39 33h1v1h-1zM37 34h2v1h-2zM51 36h1v1h-1zM38 37h1v1h-1zM53 37h1v1h-1zM54 38h1v1h-1zM37 39h1v1h-1zM40 39h1v1h-1zM37 40h1v1h-1zM39 40h3v1h-3zM43 40h1v1h-1zM39 41h1v1h-1zM41 42h1v1h-1zM37 43h1v1h-1zM36 44h1v1h-1zM39 44h2v1h-2zM39 45h1v1h-1zM38 47h2v1h-2zM42 47h1v1h-1zM38 48h3v1h-3zM34 49h2v1h-2zM37 49h1v1h-1zM34 50h3v1h-3zM37 51h1v1h-1zM39 51h1v1h-1zM41 51h1v1h-1zM39 52h2v1h-2zM42 52h1v1h-1zM45 53h1v1h-1zM28 54h1v1h-1zM47 55h1v1h-1zM49 55h2v1h-2zM81 55h1v1h-1zM85 55h2v1h-2zM50 56h1v1h-1zM76 56h2v1h-2zM89 56h1v1h-1zM93 56h1v1h-1zM92 57h1v1h-1zM95 57h4v1h-4zM100 57h2v1h-2z"/><path fill="rgb(90,90,90)" d="M19 16h1v1h-1zM18 17h1v1h-1zM17 18h2v1h-2zM17 19h2v1h-2zM17 20h1v1h-1zM19 20h1v1h-1zM19 21h2v1h-2zM20 22h1v1h-1zM25 22h1v1h-1zM22 24h3v1h-3zM27 24h1v1h-1zM32 24h1v1h-1zM21 25h1v1h-1zM24 25h2v1h-2zM28 25h2v1h-2zM31 25h2v1h-2zM34 25h2v1h-2zM33 26h1v1h-1zM36 26h1v1h-1zM38 27h1v1h-1zM37 28h1v1h-1zM49 28h2v1h-2zM56 28h1v1h-1zM38 29h3v1h-3zM57 29h1v1h-1zM40 30h1v1h-1zM47 30h1v1h-1zM55 30h1v1h-1zM36 31h2v1h-2zM41 31h1v1h-1zM55 31h1v1h-1zM69 31h1v1h-1zM40 32h1v1h-1zM71 33h1v1h-1zM39 35h1v1h-1zM41 35h1v1h-1zM39 36h1v1h-1zM36 37h1v1h-1zM39 37h1v1h-1zM51 37h2v1h-2zM54 37h1v1h-1zM67 37h2v1h-2zM38 38h2v1h-2zM48 38h1v1h-1zM67 38h1v1h-1zM41 39h1v1h-1zM38 40h1v1h-1zM44 40h1v1h-1zM38 41h1v1h-1zM42 41h1v1h-1zM42 42h1v1h-1zM36 43h1v1h-1zM40 43h2v1h-2zM37 44h2v1h-2zM41 44h1v1h-1zM37 45h1v1h-1zM40 45h1v1h-1zM37 46h2v1h-2zM40 46h2v1h-2zM40 47h2v1h-2zM42 49h1v1h-1zM37 50h2v1h-2zM42 51h1v1h-1zM46 53h1v1h-1zM47 54h1v1h-1zM48 55h1v1h-1zM87 55h1v1h-1zM89 55h1v1h-1zM51 56h1v1h-1zM53 56h2v1h-2zM56 56h1v1h-1zM58 56h1v1h-1zM68 56h1v1h-1zM70 56h1v1h-1zM88 56h1v1h-1zM91 56h2v1h-2zM65 57h4v1h-4zM106 57h1v1h-1z"/><path fill="rgb(95,95,95)" d="M20 14h1v1h-1zM34 15h1v1h-1zM47 15h1v1h-1zM19 17h1v1h-1zM19 18h1v1h-1zM20 20h2v1h-2zM21 21h1v1h-1zM21 22h1v1h-1zM21 23h1v1h-1zM24 23h2v1h-2zM27 23h1v1h-1zM19 24h2v1h-2zM25 24h2v1h-2zM28 24h1v1h-1zM31 24h1v1h-1zM48 24h1v1h-1zM30 25h1v1h-1zM33 25h1v1h-1zM36 25h1v1h-1zM48 25h1v1h-1zM37 26h1v1h-1zM41 26h2v1h-2zM49 26h1v1h-1zM37 27h1v1h-1zM39 27h1v1h-1zM46 27h1v1h-1zM49 27h1v1h-1zM55 27h1v1h-1zM64 27h1v1h-1zM39 28h3v1h-3zM43 28h1v1h-1zM55 28h1v1h-1zM77 28h1v1h-1zM37 29h1v1h-1zM41 29h2v1h-2zM47 29h2v1h-2zM51 29h1v1h-1zM55 29h1v1h-1zM36 30h1v1h-1zM41 30h2v1h-2zM58 30h1v1h-1zM70 30h1v1h-1zM47 31h2v1h-2zM51 31h1v1h-1zM53 31h1v1h-1zM70 31h1v1h-1zM41 32h1v1h-1zM47 32h1v1h-1zM53 32h1v1h-1zM66 32h3v1h-3zM47 33h1v1h-1zM65 33h1v1h-1zM67 33h1v1h-1zM70 33h1v1h-1zM47 34h1v1h-1zM66 34h2v1h-2zM70 34h1v1h-1zM40 35h1v1h-1zM50 35h3v1h-3zM69 35h1v1h-1zM40 36h2v1h-2zM50 36h1v1h-1zM53 36h1v1h-1zM55 36h1v1h-1zM64 36h1v1h-1zM67 36h3v1h-3zM37 37h1v1h-1zM40 37h1v1h-1zM46 37h2v1h-2zM50 37h1v1h-1zM55 37h1v1h-1zM64 37h1v1h-1zM37 38h1v1h-1zM49 38h1v1h-1zM53 38h1v1h-1zM66 38h1v1h-1zM68 38h1v1h-1zM38 39h2v1h-2zM42 40h1v1h-1zM38 45h1v1h-1zM41 45h1v1h-1zM39 46h1v1h-1zM42 46h1v1h-1zM42 48h1v1h-1zM38 49h2v1h-2zM39 50h2v1h-2zM42 50h1v1h-1zM40 51h1v1h-1zM43 52h1v1h-1zM50 54h2v1h-2zM78 54h2v1h-2zM51 55h2v1h-2zM77 55h1v1h-1zM79 55h1v1h-1zM88 55h1v1h-1zM90 55h1v1h-1zM93 55h1v1h-1zM52 56h1v1h-1zM61 56h1v1h-1zM63 56h1v1h-1zM67 56h1v1h-1zM69 56h1v1h-1zM75 56h1v1h-1zM90 56h1v1h-1zM94 56h1v1h-1zM99 56h1v1h-1zM105 56h1v1h-1z"/><path fill="rgb(100,100,100)" d="M20 15h1v1h-1zM19 19h1v1h-1zM53 20h1v1h-1zM25 21h1v1h-1zM24 22h1v1h-1zM26 22h1v1h-1zM20 23h1v1h-1zM22 23h2v1h-2zM26 23h1v1h-1zM28 23h1v1h-1zM32 23h1v1h-1zM30 24h1v1h-1zM33 24h1v1h-1zM35 24h1v1h-1zM56 24h2v1h-2zM37 25h1v1h-1zM49 25h1v1h-1zM54 25h1v1h-1zM39 26h2v1h-2zM47 26h2v1h-2zM41 27h3v1h-3zM47 27h1v1h-1zM50 27h1v1h-1zM54 27h1v1h-1zM60 27h1v1h-1zM42 28h1v1h-1zM46 28h1v1h-1zM51 28h1v1h-1zM53 28h1v1h-1zM57 28h1v1h-1zM43 29h1v1h-1zM50 29h1v1h-1zM58 29h1v1h-1zM37 30h1v1h-1zM49 30h3v1h-3zM54 30h1v1h-1zM57 30h1v1h-1zM69 30h1v1h-1zM71 30h1v1h-1zM74 30h1v1h-1zM46 31h1v1h-1zM49 31h2v1h-2zM52 31h1v1h-1zM66 31h1v1h-1zM68 31h1v1h-1zM71 31h1v1h-1zM75 31h1v1h-1zM42 32h1v1h-1zM46 32h1v1h-1zM50 32h1v1h-1zM52 32h1v1h-1zM54 32h1v1h-1zM56 32h1v1h-1zM65 32h1v1h-1zM69 32h1v1h-1zM71 32h1v1h-1zM40 33h2v1h-2zM46 33h1v1h-1zM54 33h1v1h-1zM64 33h1v1h-1zM66 33h1v1h-1zM68 33h2v1h-2zM39 34h2v1h-2zM53 34h2v1h-2zM56 34h1v1h-1zM59 34h1v1h-1zM65 34h1v1h-1zM69 34h1v1h-1zM71 34h1v1h-1zM53 35h1v1h-1zM55 35h2v1h-2zM59 35h1v1h-1zM64 35h1v1h-1zM67 35h1v1h-1zM74 35h2v1h-2zM47 36h1v1h-1zM52 36h1v1h-1zM54 36h1v1h-1zM63 36h1v1h-1zM70 36h1v1h-1zM41 37h1v1h-1zM59 37h1v1h-1zM66 37h1v1h-1zM69 37h1v1h-1zM40 38h2v1h-2zM46 38h2v1h-2zM50 38h2v1h-2zM58 38h1v1h-1zM65 38h1v1h-1zM69 38h1v1h-1zM43 39h2v1h-2zM48 39h2v1h-2zM64 39h1v1h-1zM70 39h1v1h-1zM43 41h2v1h-2zM44 42h1v1h-1zM44 43h1v1h-1zM42 45h2v1h-2zM43 47h1v1h-1zM43 51h1v1h-1zM45 52h1v1h-1zM48 54h2v1h-2zM80 54h3v1h-3zM84 54h3v1h-3zM53 55h1v1h-1zM69 55h1v1h-1zM91 55h1v1h-1zM55 56h1v1h-1zM59 56h2v1h-2zM62 56h1v1h-1zM65 56h1v1h-1zM74 56h1v1h-1zM100 56h1v1h-1zM102 56h3v1h-3z"/><path fill="rgb(105,105,105)" d="M21 14h1v1h-1zM21 15h1v1h-1zM20 19h1v1h-1zM55 21h1v1h-1zM22 22h1v1h-1zM54 22h1v1h-1zM31 23h1v1h-1zM48 23h1v1h-1zM56 23h2v1h-2zM29 24h1v1h-1zM34 24h1v1h-1zM36 24h1v1h-1zM49 24h1v1h-1zM53 24h1v1h-1zM55 24h1v1h-1zM40 25h4v1h-4zM47 25h1v1h-1zM52 25h2v1h-2zM55 25h1v1h-1zM46 26h1v1h-1zM53 26h2v1h-2zM56 26h1v1h-1zM58 26h1v1h-1zM62 26h3v1h-3zM40 27h1v1h-1zM48 27h1v1h-1zM52 27h1v1h-1zM56 27h4v1h-4zM45 28h1v1h-1zM47 28h1v1h-1zM52 28h1v1h-1zM54 28h1v1h-1zM58 28h1v1h-1zM60 28h2v1h-2zM64 28h1v1h-1zM67 28h1v1h-1zM71 28h1v1h-1zM44 29h1v1h-1zM46 29h1v1h-1zM49 29h1v1h-1zM52 29h3v1h-3zM61 29h2v1h-2zM64 29h1v1h-1zM67 29h2v1h-2zM71 29h3v1h-3zM88 29h1v1h-1zM52 30h2v1h-2zM59 30h1v1h-1zM62 30h2v1h-2zM65 30h2v1h-2zM68 30h1v1h-1zM72 30h2v1h-2zM75 30h2v1h-2zM42 31h2v1h-2zM54 31h1v1h-1zM57 31h3v1h-3zM65 31h1v1h-1zM67 31h1v1h-1zM72 31h1v1h-1zM48 32h2v1h-2zM51 32h1v1h-1zM55 32h1v1h-1zM70 32h1v1h-1zM72 32h1v1h-1zM75 32h1v1h-1zM42 33h1v1h-1zM48 33h1v1h-1zM53 33h1v1h-1zM55 33h2v1h-2zM63 33h1v1h-1zM72 33h1v1h-1zM41 34h2v1h-2zM44 34h1v1h-1zM50 34h3v1h-3zM55 34h1v1h-1zM57 34h1v1h-1zM64 34h1v1h-1zM68 34h1v1h-1zM73 34h1v1h-1zM42 35h1v1h-1zM54 35h1v1h-1zM58 35h1v1h-1zM60 35h1v1h-1zM63 35h1v1h-1zM65 35h2v1h-2zM68 35h1v1h-1zM70 35h1v1h-1zM73 35h1v1h-1zM76 35h1v1h-1zM42 36h1v1h-1zM44 36h1v1h-1zM46 36h1v1h-1zM48 36h2v1h-2zM56 36h1v1h-1zM59 36h1v1h-1zM65 36h1v1h-1zM71 36h1v1h-1zM76 36h1v1h-1zM45 37h1v1h-1zM48 37h2v1h-2zM58 37h1v1h-1zM63 37h1v1h-1zM65 37h1v1h-1zM70 37h1v1h-1zM42 38h2v1h-2zM52 38h1v1h-1zM63 38h2v1h-2zM72 38h1v1h-1zM42 39h1v1h-1zM50 39h1v1h-1zM52 39h1v1h-1zM54 39h1v1h-1zM65 39h2v1h-2zM68 39h2v1h-2zM74 39h1v1h-1zM49 40h1v1h-1zM52 40h1v1h-1zM71 40h1v1h-1zM47 41h1v1h-1zM43 42h1v1h-1zM45 42h1v1h-1zM47 42h1v1h-1zM43 43h1v1h-1zM45 43h1v1h-1zM42 44h2v1h-2zM87 44h1v1h-1zM44 45h1v1h-1zM43 46h2v1h-2zM44 47h1v1h-1zM43 48h2v1h-2zM45 49h1v1h-1zM45 50h1v1h-1zM46 52h1v1h-1zM79 53h1v1h-1zM101 53h1v1h-1zM76 54h1v1h-1zM83 54h1v1h-1zM87 54h1v1h-1zM89 54h2v1h-2zM57 55h2v1h-2zM61 55h1v1h-1zM68 55h1v1h-1zM92 55h1v1h-1zM99 55h2v1h-2zM71 56h3v1h-3zM95 56h1v1h-1zM101 56h1v1h-1z"/><path fill="rgb(110,110,110)" d="M22 15h1v1h-1zM20 16h1v1h-1zM20 17h1v1h-1zM24 19h1v1h-1zM53 19h1v1h-1zM24 20h2v1h-2zM88 20h1v1h-1zM22 21h1v1h-1zM24 21h1v1h-1zM26 21h1v1h-1zM31 21h1v1h-1zM53 21h1v1h-1zM23 22h1v1h-1zM28 22h1v1h-1zM32 22h1v1h-1zM53 22h1v1h-1zM55 22h1v1h-1zM49 23h1v1h-1zM54 23h1v1h-1zM62 23h1v1h-1zM47 24h1v1h-1zM54 24h1v1h-1zM58 24h1v1h-1zM62 24h1v1h-1zM39 25h1v1h-1zM44 25h1v1h-1zM50 25h1v1h-1zM56 25h3v1h-3zM61 25h2v1h-2zM64 25h1v1h-1zM38 26h1v1h-1zM43 26h3v1h-3zM52 26h1v1h-1zM55 26h1v1h-1zM57 26h1v1h-1zM61 26h1v1h-1zM53 27h1v1h-1zM61 27h3v1h-3zM65 27h1v1h-1zM70 27h2v1h-2zM63 28h1v1h-1zM68 28h3v1h-3zM72 28h1v1h-1zM45 29h1v1h-1zM60 29h1v1h-1zM65 29h2v1h-2zM70 29h1v1h-1zM46 30h1v1h-1zM67 30h1v1h-1zM45 31h1v1h-1zM74 31h1v1h-1zM76 31h1v1h-1zM89 31h2v1h-2zM43 32h1v1h-1zM45 32h1v1h-1zM57 32h1v1h-1zM63 32h2v1h-2zM74 32h1v1h-1zM76 32h1v1h-1zM88 32h3v1h-3zM43 33h1v1h-1zM45 33h1v1h-1zM49 33h2v1h-2zM58 33h1v1h-1zM62 33h1v1h-1zM73 33h2v1h-2zM43 34h1v1h-1zM46 34h1v1h-1zM49 34h1v1h-1zM58 34h1v1h-1zM63 34h1v1h-1zM72 34h1v1h-1zM75 34h1v1h-1zM45 35h3v1h-3zM49 35h1v1h-1zM57 35h1v1h-1zM71 35h2v1h-2zM43 36h1v1h-1zM45 36h1v1h-1zM57 36h1v1h-1zM62 36h1v1h-1zM66 36h1v1h-1zM72 36h2v1h-2zM75 36h1v1h-1zM42 37h1v1h-1zM44 37h1v1h-1zM56 37h2v1h-2zM71 37h2v1h-2zM75 37h1v1h-1zM44 38h2v1h-2zM55 38h1v1h-1zM71 38h1v1h-1zM73 38h1v1h-1zM45 39h1v1h-1zM51 39h1v1h-1zM63 39h1v1h-1zM67 39h1v1h-1zM72 39h2v1h-2zM51 40h1v1h-1zM63 40h4v1h-4zM69 40h2v1h-2zM45 41h1v1h-1zM48 41h2v1h-2zM66 41h1v1h-1zM71 41h2v1h-2zM46 42h1v1h-1zM48 42h1v1h-1zM42 43h1v1h-1zM47 43h1v1h-1zM90 43h1v1h-1zM44 44h1v1h-1zM45 45h1v1h-1zM45 46h1v1h-1zM44 49h1v1h-1zM43 50h2v1h-2zM44 51h1v1h-1zM84 52h1v1h-1zM80 53h2v1h-2zM84 53h2v1h-2zM77 54h1v1h-1zM88 54h1v1h-1zM56 55h1v1h-1zM62 55h3v1h-3zM70 55h1v1h-1zM75 55h1v1h-1zM94 55h1v1h-1zM98 55h1v1h-1zM66 56h1v1h-1zM96 56h3v1h-3zM106 56h1v1h-1z"/><path fill="rgb(115,115,115)" d="M22 16h1v1h-1zM82 17h2v1h-2zM21 19h1v1h-1zM22 20h1v1h-1zM26 20h1v1h-1zM54 20h1v1h-1zM85 20h1v1h-1zM30 21h1v1h-1zM49 21h1v1h-1zM81 21h1v1h-1zM27 22h1v1h-1zM29 22h1v1h-1zM31 22h1v1h-1zM33 22h1v1h-1zM29 23h2v1h-2zM33 23h1v1h-1zM53 23h1v1h-1zM55 23h1v1h-1zM58 23h1v1h-1zM63 23h1v1h-1zM38 24h2v1h-2zM42 24h2v1h-2zM50 24h1v1h-1zM38 25h1v1h-1zM46 25h1v1h-1zM51 25h1v1h-1zM63 25h1v1h-1zM50 26h2v1h-2zM59 26h2v1h-2zM45 27h1v1h-1zM73 27h1v1h-1zM44 28h1v1h-1zM48 28h1v1h-1zM59 28h1v1h-1zM62 28h1v1h-1zM66 28h1v1h-1zM59 29h1v1h-1zM63 29h1v1h-1zM69 29h1v1h-1zM74 29h4v1h-4zM85 29h1v1h-1zM87 29h1v1h-1zM89 29h1v1h-1zM44 30h2v1h-2zM60 30h1v1h-1zM64 30h1v1h-1zM77 30h1v1h-1zM79 30h1v1h-1zM88 30h3v1h-3zM62 31h1v1h-1zM64 31h1v1h-1zM73 31h1v1h-1zM77 31h3v1h-3zM44 32h1v1h-1zM62 32h1v1h-1zM73 32h1v1h-1zM44 33h1v1h-1zM51 33h1v1h-1zM57 33h1v1h-1zM61 33h1v1h-1zM75 33h1v1h-1zM87 33h3v1h-3zM45 34h1v1h-1zM48 34h1v1h-1zM61 34h2v1h-2zM85 34h1v1h-1zM43 35h2v1h-2zM48 35h1v1h-1zM58 36h1v1h-1zM22 37h1v1h-1zM43 37h1v1h-1zM62 37h1v1h-1zM76 37h1v1h-1zM59 38h1v1h-1zM70 38h1v1h-1zM74 38h1v1h-1zM47 39h1v1h-1zM53 39h1v1h-1zM45 40h1v1h-1zM48 40h1v1h-1zM68 40h1v1h-1zM72 40h2v1h-2zM68 41h3v1h-3zM45 47h1v1h-1zM45 48h1v1h-1zM43 49h1v1h-1zM46 49h1v1h-1zM46 50h1v1h-1zM45 51h2v1h-2zM85 52h1v1h-1zM47 53h1v1h-1zM50 53h1v1h-1zM78 53h1v1h-1zM52 54h1v1h-1zM75 54h1v1h-1zM99 54h1v1h-1zM54 55h1v1h-1zM60 55h1v1h-1zM65 55h1v1h-1zM67 55h1v1h-1zM105 55h1v1h-1z"/><path fill="rgb(120,120,120)" d="M20 13h1v1h-1zM46 13h1v1h-1zM22 14h1v1h-1zM75 15h1v1h-1zM79 15h1v1h-1zM21 16h1v1h-1zM78 16h2v1h-2zM29 17h1v1h-1zM83 18h1v1h-1zM93 18h1v1h-1zM25 19h1v1h-1zM44 19h1v1h-1zM52 19h1v1h-1zM23 20h1v1h-1zM27 20h1v1h-1zM30 20h1v1h-1zM52 20h1v1h-1zM81 20h1v1h-1zM51 21h2v1h-2zM80 21h1v1h-1zM84 21h1v1h-1zM30 22h1v1h-1zM49 22h1v1h-1zM52 22h1v1h-1zM56 22h2v1h-2zM34 23h2v1h-2zM52 23h1v1h-1zM59 23h1v1h-1zM37 24h1v1h-1zM40 24h2v1h-2zM44 24h1v1h-1zM51 24h1v1h-1zM59 24h1v1h-1zM60 25h1v1h-1zM65 26h1v1h-1zM44 27h1v1h-1zM66 27h1v1h-1zM72 27h1v1h-1zM65 28h1v1h-1zM79 29h1v1h-1zM83 29h2v1h-2zM61 30h1v1h-1zM84 30h2v1h-2zM87 30h1v1h-1zM44 31h1v1h-1zM63 31h1v1h-1zM86 31h3v1h-3zM58 32h3v1h-3zM79 32h1v1h-1zM82 32h1v1h-1zM86 32h1v1h-1zM59 33h2v1h-2zM76 33h1v1h-1zM86 33h1v1h-1zM77 34h1v1h-1zM86 34h1v1h-1zM62 35h1v1h-1zM89 35h1v1h-1zM60 36h1v1h-1zM74 36h1v1h-1zM60 37h1v1h-1zM73 37h2v1h-2zM56 38h1v1h-1zM75 38h1v1h-1zM46 39h1v1h-1zM55 39h1v1h-1zM59 39h1v1h-1zM53 40h1v1h-1zM75 40h1v1h-1zM46 41h1v1h-1zM50 41h1v1h-1zM64 41h2v1h-2zM67 41h1v1h-1zM49 42h1v1h-1zM45 44h1v1h-1zM47 44h1v1h-1zM92 44h1v1h-1zM85 51h1v1h-1zM60 52h1v1h-1zM82 52h2v1h-2zM48 53h2v1h-2zM75 53h3v1h-3zM82 53h2v1h-2zM86 53h2v1h-2zM89 53h1v1h-1zM53 54h1v1h-1zM58 54h1v1h-1zM60 54h1v1h-1zM91 54h4v1h-4zM98 54h1v1h-1zM55 55h1v1h-1zM59 55h1v1h-1zM71 55h4v1h-4zM103 55h1v1h-1zM106 55h1v1h-1zM64 56h1v1h-1z"/><path fill="rgb(125,125,125)" d="M50 6h1v1h-1zM81 8h1v1h-1zM22 12h2v1h-2zM21 13h2v1h-2zM45 13h1v1h-1zM23 14h1v1h-1zM39 14h1v1h-1zM41 14h1v1h-1zM39 15h1v1h-1zM82 16h4v1h-4zM28 17h1v1h-1zM78 17h2v1h-2zM84 17h1v1h-1zM25 18h1v1h-1zM31 18h1v1h-1zM39 18h1v1h-1zM53 18h1v1h-1zM82 18h1v1h-1zM26 19h1v1h-1zM84 19h1v1h-1zM94 19h1v1h-1zM29 20h1v1h-1zM44 20h1v1h-1zM49 20h1v1h-1zM51 20h1v1h-1zM55 20h2v1h-2zM82 20h1v1h-1zM84 20h1v1h-1zM23 21h1v1h-1zM27 21h2v1h-2zM50 21h1v1h-1zM82 21h2v1h-2zM85 21h1v1h-1zM34 22h2v1h-2zM48 22h1v1h-1zM51 22h1v1h-1zM58 22h1v1h-1zM62 22h2v1h-2zM36 23h1v1h-1zM38 23h1v1h-1zM40 23h1v1h-1zM47 23h1v1h-1zM50 23h2v1h-2zM60 23h2v1h-2zM45 24h1v1h-1zM45 25h1v1h-1zM59 25h1v1h-1zM67 26h1v1h-1zM73 26h1v1h-1zM67 27h1v1h-1zM69 27h1v1h-1zM73 28h3v1h-3zM81 28h1v1h-1zM80 29h2v1h-2zM86 29h1v1h-1zM90 29h1v1h-1zM78 30h1v1h-1zM80 30h1v1h-1zM83 30h1v1h-1zM86 30h1v1h-1zM60 31h2v1h-2zM61 32h1v1h-1zM77 32h2v1h-2zM91 32h1v1h-1zM77 33h2v1h-2zM82 33h1v1h-1zM90 33h1v1h-1zM76 34h1v1h-1zM78 34h1v1h-1zM87 34h3v1h-3zM61 35h1v1h-1zM85 35h1v1h-1zM77 36h1v1h-1zM90 36h1v1h-1zM61 37h1v1h-1zM90 37h1v1h-1zM92 37h1v1h-1zM57 38h1v1h-1zM62 38h1v1h-1zM76 38h1v1h-1zM101 38h1v1h-1zM75 39h1v1h-1zM47 40h1v1h-1zM54 40h1v1h-1zM67 40h1v1h-1zM51 41h2v1h-2zM62 41h1v1h-1zM32 42h1v1h-1zM72 42h2v1h-2zM46 43h1v1h-1zM20 44h1v1h-1zM48 45h1v1h-1zM46 47h1v1h-1zM46 48h1v1h-1zM84 51h1v1h-1zM47 52h1v1h-1zM53 52h1v1h-1zM78 52h2v1h-2zM81 52h1v1h-1zM86 52h1v1h-1zM51 53h1v1h-1zM55 54h3v1h-3zM59 54h1v1h-1zM63 54h1v1h-1zM70 54h1v1h-1zM74 54h1v1h-1zM66 55h1v1h-1zM95 55h3v1h-3zM101 55h1v1h-1z"/><path fill="rgb(130,130,130)" d="M33 4h1v1h-1zM30 8h1v1h-1zM42 11h1v1h-1zM44 11h1v1h-1zM21 12h1v1h-1zM38 12h1v1h-1zM23 13h1v1h-1zM40 13h1v1h-1zM40 14h1v1h-1zM42 14h1v1h-1zM40 15h1v1h-1zM28 16h1v1h-1zM80 16h1v1h-1zM25 17h2v1h-2zM30 17h1v1h-1zM38 17h1v1h-1zM67 17h1v1h-1zM81 17h1v1h-1zM86 17h1v1h-1zM24 18h1v1h-1zM28 18h3v1h-3zM36 18h1v1h-1zM49 18h1v1h-1zM54 18h1v1h-1zM81 18h1v1h-1zM84 18h3v1h-3zM23 19h1v1h-1zM29 19h1v1h-1zM39 19h2v1h-2zM79 19h1v1h-1zM81 19h2v1h-2zM85 19h1v1h-1zM31 20h1v1h-1zM45 20h1v1h-1zM80 20h1v1h-1zM29 21h1v1h-1zM48 21h1v1h-1zM56 21h1v1h-1zM62 21h1v1h-1zM36 22h1v1h-1zM47 22h1v1h-1zM50 22h1v1h-1zM59 22h3v1h-3zM39 23h1v1h-1zM41 23h1v1h-1zM43 23h1v1h-1zM46 24h1v1h-1zM60 24h2v1h-2zM65 25h1v1h-1zM66 26h1v1h-1zM72 26h1v1h-1zM74 27h1v1h-1zM88 27h1v1h-1zM76 28h1v1h-1zM80 28h1v1h-1zM87 28h2v1h-2zM78 29h1v1h-1zM82 29h1v1h-1zM20 31h1v1h-1zM80 31h1v1h-1zM82 31h4v1h-4zM91 31h1v1h-1zM83 32h1v1h-1zM83 33h3v1h-3zM83 34h2v1h-2zM90 34h1v1h-1zM77 35h3v1h-3zM90 35h1v1h-1zM87 36h1v1h-1zM89 36h1v1h-1zM91 37h1v1h-1zM60 38h1v1h-1zM91 38h2v1h-2zM58 39h1v1h-1zM60 39h1v1h-1zM62 39h1v1h-1zM76 39h1v1h-1zM91 39h1v1h-1zM17 40h1v1h-1zM46 40h1v1h-1zM62 40h1v1h-1zM74 40h1v1h-1zM76 40h1v1h-1zM63 41h1v1h-1zM74 41h1v1h-1zM50 42h2v1h-2zM56 42h1v1h-1zM65 42h3v1h-3zM69 42h1v1h-1zM71 42h1v1h-1zM74 42h1v1h-1zM31 43h1v1h-1zM48 43h1v1h-1zM51 43h1v1h-1zM46 44h1v1h-1zM48 44h3v1h-3zM84 45h1v1h-1zM106 45h1v1h-1zM46 46h1v1h-1zM84 46h2v1h-2zM106 46h1v1h-1zM47 47h1v1h-1zM78 47h1v1h-1zM83 47h1v1h-1zM85 47h1v1h-1zM95 47h1v1h-1zM47 48h1v1h-1zM83 48h1v1h-1zM85 48h1v1h-1zM81 51h2v1h-2zM80 52h1v1h-1zM87 52h1v1h-1zM52 53h3v1h-3zM57 53h1v1h-1zM90 53h1v1h-1zM54 54h1v1h-1zM62 54h1v1h-1zM64 54h1v1h-1zM67 54h3v1h-3zM97 54h1v1h-1zM100 54h1v1h-1zM78 55h1v1h-1zM80 55h1v1h-1zM102 55h1v1h-1zM104 55h1v1h-1z"/><path fill="rgb(135,135,135)" d="M54 0h1v1h-1zM43 9h3v1h-3zM43 10h2v1h-2zM22 11h1v1h-1zM39 11h2v1h-2zM45 11h2v1h-2zM40 12h1v1h-1zM42 12h1v1h-1zM45 12h2v1h-2zM36 13h1v1h-1zM38 13h2v1h-2zM41 13h2v1h-2zM47 13h1v1h-1zM55 14h1v1h-1zM41 15h1v1h-1zM52 15h1v1h-1zM84 15h2v1h-2zM23 16h1v1h-1zM29 16h1v1h-1zM34 16h1v1h-1zM38 16h2v1h-2zM21 17h1v1h-1zM35 17h1v1h-1zM37 17h1v1h-1zM48 17h2v1h-2zM77 17h1v1h-1zM85 17h1v1h-1zM92 17h1v1h-1zM21 18h2v1h-2zM26 18h1v1h-1zM47 18h1v1h-1zM50 18h1v1h-1zM52 18h1v1h-1zM27 19h1v1h-1zM30 19h2v1h-2zM35 19h2v1h-2zM38 19h1v1h-1zM41 19h1v1h-1zM50 19h2v1h-2zM54 19h4v1h-4zM60 19h2v1h-2zM86 19h1v1h-1zM28 20h1v1h-1zM32 20h1v1h-1zM37 20h1v1h-1zM41 20h1v1h-1zM57 20h1v1h-1zM61 20h1v1h-1zM83 20h1v1h-1zM86 20h1v1h-1zM95 20h1v1h-1zM32 21h1v1h-1zM36 21h1v1h-1zM44 21h2v1h-2zM57 21h1v1h-1zM79 21h1v1h-1zM44 22h1v1h-1zM82 22h2v1h-2zM37 23h1v1h-1zM42 23h1v1h-1zM44 23h1v1h-1zM64 23h1v1h-1zM64 24h3v1h-3zM66 25h1v1h-1zM71 26h1v1h-1zM74 26h1v1h-1zM22 27h1v1h-1zM26 28h1v1h-1zM79 28h1v1h-1zM82 28h1v1h-1zM84 28h2v1h-2zM91 29h3v1h-3zM82 30h1v1h-1zM91 30h2v1h-2zM81 31h1v1h-1zM92 31h1v1h-1zM80 32h1v1h-1zM85 32h1v1h-1zM92 32h1v1h-1zM81 33h1v1h-1zM91 33h1v1h-1zM91 34h1v1h-1zM84 35h1v1h-1zM86 35h3v1h-3zM91 35h1v1h-1zM78 36h1v1h-1zM88 36h1v1h-1zM92 36h1v1h-1zM88 37h2v1h-2zM93 37h1v1h-1zM89 38h2v1h-2zM93 38h1v1h-1zM56 39h1v1h-1zM90 39h1v1h-1zM55 40h1v1h-1zM61 40h1v1h-1zM105 40h1v1h-1zM64 42h1v1h-1zM75 42h1v1h-1zM49 43h2v1h-2zM57 43h1v1h-1zM75 43h1v1h-1zM51 44h1v1h-1zM106 44h1v1h-1zM46 45h2v1h-2zM81 45h1v1h-1zM47 46h1v1h-1zM79 46h1v1h-1zM81 46h1v1h-1zM83 46h1v1h-1zM48 47h1v1h-1zM79 47h1v1h-1zM81 47h1v1h-1zM84 47h1v1h-1zM48 48h1v1h-1zM82 48h1v1h-1zM47 49h1v1h-1zM83 49h1v1h-1zM83 51h1v1h-1zM86 51h1v1h-1zM50 52h1v1h-1zM52 52h1v1h-1zM57 52h1v1h-1zM75 52h3v1h-3zM55 53h1v1h-1zM58 53h1v1h-1zM63 53h1v1h-1zM74 53h1v1h-1zM88 53h1v1h-1zM61 54h1v1h-1zM66 54h1v1h-1zM71 54h1v1h-1zM73 54h1v1h-1zM95 54h1v1h-1zM103 54h2v1h-2zM106 54h1v1h-1z"/><path fill="rgb(140,140,140)" d="M71 3h1v1h-1zM73 4h1v1h-1zM78 6h1v1h-1zM80 7h1v1h-1zM44 8h1v1h-1zM42 9h1v1h-1zM42 10h1v1h-1zM45 10h1v1h-1zM55 10h1v1h-1zM84 10h1v1h-1zM41 11h1v1h-1zM43 11h1v1h-1zM39 12h1v1h-1zM44 12h1v1h-1zM37 13h1v1h-1zM44 13h1v1h-1zM36 14h1v1h-1zM46 14h1v1h-1zM53 14h1v1h-1zM23 15h1v1h-1zM53 15h1v1h-1zM55 15h3v1h-3zM78 15h1v1h-1zM80 15h1v1h-1zM83 15h1v1h-1zM26 16h1v1h-1zM30 16h1v1h-1zM33 16h1v1h-1zM35 16h1v1h-1zM40 16h1v1h-1zM49 16h1v1h-1zM55 16h2v1h-2zM77 16h1v1h-1zM86 16h1v1h-1zM22 17h2v1h-2zM27 17h1v1h-1zM34 17h1v1h-1zM39 17h1v1h-1zM53 17h1v1h-1zM55 17h1v1h-1zM23 18h1v1h-1zM37 18h1v1h-1zM40 18h1v1h-1zM44 18h1v1h-1zM51 18h1v1h-1zM55 18h1v1h-1zM78 18h1v1h-1zM80 18h1v1h-1zM28 19h1v1h-1zM32 19h1v1h-1zM43 19h1v1h-1zM45 19h1v1h-1zM47 19h3v1h-3zM58 19h2v1h-2zM78 19h1v1h-1zM80 19h1v1h-1zM83 19h1v1h-1zM33 20h3v1h-3zM40 20h1v1h-1zM42 20h1v1h-1zM50 20h1v1h-1zM79 20h1v1h-1zM18 21h1v1h-1zM35 21h1v1h-1zM42 21h1v1h-1zM58 21h1v1h-1zM78 21h1v1h-1zM86 21h1v1h-1zM37 22h1v1h-1zM41 22h1v1h-1zM45 22h1v1h-1zM79 22h2v1h-2zM84 22h1v1h-1zM45 23h2v1h-2zM67 24h1v1h-1zM67 25h2v1h-2zM70 26h1v1h-1zM99 26h1v1h-1zM75 27h1v1h-1zM79 27h1v1h-1zM87 27h1v1h-1zM78 28h1v1h-1zM83 28h1v1h-1zM86 28h1v1h-1zM94 28h1v1h-1zM100 28h1v1h-1zM81 30h1v1h-1zM81 32h1v1h-1zM84 32h1v1h-1zM79 33h2v1h-2zM79 34h2v1h-2zM82 34h1v1h-1zM80 35h1v1h-1zM79 36h1v1h-1zM86 36h1v1h-1zM91 36h1v1h-1zM77 37h1v1h-1zM61 38h1v1h-1zM88 38h1v1h-1zM94 38h1v1h-1zM57 39h1v1h-1zM92 39h1v1h-1zM59 40h2v1h-2zM53 41h1v1h-1zM63 42h1v1h-1zM68 42h1v1h-1zM70 42h1v1h-1zM52 43h1v1h-1zM63 43h1v1h-1zM65 43h1v1h-1zM74 43h1v1h-1zM81 43h1v1h-1zM77 44h1v1h-1zM34 45h1v1h-1zM49 45h1v1h-1zM83 45h1v1h-1zM48 46h1v1h-1zM78 46h1v1h-1zM80 46h1v1h-1zM82 46h1v1h-1zM86 46h2v1h-2zM80 47h1v1h-1zM82 47h1v1h-1zM86 47h1v1h-1zM84 48h1v1h-1zM84 49h1v1h-1zM82 50h1v1h-1zM47 51h1v1h-1zM53 51h1v1h-1zM58 51h1v1h-1zM77 51h2v1h-2zM56 52h1v1h-1zM63 52h1v1h-1zM89 52h2v1h-2zM56 53h1v1h-1zM60 53h1v1h-1zM62 53h1v1h-1zM91 53h1v1h-1zM97 53h1v1h-1zM65 54h1v1h-1zM96 54h1v1h-1zM76 55h1v1h-1z"/><path fill="rgb(145,145,145)" d="M50 0h1v1h-1zM53 0h1v1h-1zM43 1h1v1h-1zM38 2h1v1h-1zM35 3h1v1h-1zM76 5h1v1h-1zM83 9h1v1h-1zM41 10h1v1h-1zM46 10h2v1h-2zM23 11h1v1h-1zM51 11h1v1h-1zM24 12h1v1h-1zM41 12h1v1h-1zM43 12h1v1h-1zM47 12h1v1h-1zM51 12h1v1h-1zM48 13h1v1h-1zM56 13h1v1h-1zM37 14h2v1h-2zM45 14h1v1h-1zM47 14h1v1h-1zM49 14h1v1h-1zM52 14h1v1h-1zM56 14h1v1h-1zM81 14h1v1h-1zM33 15h1v1h-1zM35 15h3v1h-3zM42 15h2v1h-2zM54 15h1v1h-1zM37 16h1v1h-1zM57 16h1v1h-1zM81 16h1v1h-1zM91 16h1v1h-1zM24 17h1v1h-1zM31 17h1v1h-1zM33 17h1v1h-1zM36 17h1v1h-1zM40 17h1v1h-1zM46 17h2v1h-2zM52 17h1v1h-1zM54 17h1v1h-1zM80 17h1v1h-1zM27 18h1v1h-1zM35 18h1v1h-1zM38 18h1v1h-1zM45 18h2v1h-2zM56 18h1v1h-1zM60 18h1v1h-1zM79 18h1v1h-1zM33 19h1v1h-1zM37 19h1v1h-1zM42 19h1v1h-1zM36 20h1v1h-1zM38 20h1v1h-1zM43 20h1v1h-1zM48 20h1v1h-1zM58 20h2v1h-2zM62 20h1v1h-1zM34 21h1v1h-1zM41 21h1v1h-1zM60 21h2v1h-2zM63 21h1v1h-1zM40 22h1v1h-1zM43 22h1v1h-1zM46 22h1v1h-1zM64 22h1v1h-1zM78 22h1v1h-1zM81 22h1v1h-1zM68 24h2v1h-2zM73 25h1v1h-1zM68 26h2v1h-2zM87 26h2v1h-2zM78 27h1v1h-1zM80 27h1v1h-1zM89 28h2v1h-2zM93 28h1v1h-1zM94 29h1v1h-1zM101 30h1v1h-1zM92 33h1v1h-1zM81 34h1v1h-1zM81 35h3v1h-3zM84 36h2v1h-2zM93 36h1v1h-1zM80 37h1v1h-1zM87 37h1v1h-1zM104 37h1v1h-1zM61 39h1v1h-1zM77 39h1v1h-1zM89 39h1v1h-1zM77 40h1v1h-1zM91 40h1v1h-1zM61 41h1v1h-1zM75 41h1v1h-1zM52 42h1v1h-1zM55 42h1v1h-1zM92 42h1v1h-1zM53 43h1v1h-1zM56 43h1v1h-1zM64 43h1v1h-1zM66 43h1v1h-1zM73 43h1v1h-1zM52 44h1v1h-1zM63 44h1v1h-1zM75 44h1v1h-1zM82 44h2v1h-2zM50 45h1v1h-1zM78 45h2v1h-2zM82 45h1v1h-1zM77 46h1v1h-1zM77 48h2v1h-2zM80 48h2v1h-2zM86 48h2v1h-2zM48 49h1v1h-1zM82 49h1v1h-1zM47 50h1v1h-1zM57 50h2v1h-2zM83 50h1v1h-1zM79 51h2v1h-2zM41 52h1v1h-1zM48 52h2v1h-2zM67 53h1v1h-1zM92 53h1v1h-1zM98 53h1v1h-1zM104 53h1v1h-1zM106 53h1v1h-1zM72 54h1v1h-1zM102 54h1v1h-1z"/><path fill="rgb(150,150,150)" d="M51 0h2v1h-2zM42 1h1v1h-1zM43 8h1v1h-1zM45 8h1v1h-1zM40 10h1v1h-1zM51 10h1v1h-1zM54 10h1v1h-1zM38 11h1v1h-1zM50 11h1v1h-1zM52 11h1v1h-1zM54 11h2v1h-2zM48 12h1v1h-1zM50 12h1v1h-1zM52 12h3v1h-3zM87 12h1v1h-1zM24 13h1v1h-1zM26 13h1v1h-1zM49 13h4v1h-4zM24 14h2v1h-2zM44 14h1v1h-1zM48 14h1v1h-1zM50 14h1v1h-1zM54 14h1v1h-1zM79 14h1v1h-1zM82 14h2v1h-2zM38 15h1v1h-1zM46 15h1v1h-1zM81 15h2v1h-2zM90 15h1v1h-1zM25 16h1v1h-1zM32 16h1v1h-1zM36 16h1v1h-1zM41 16h2v1h-2zM47 16h2v1h-2zM50 16h1v1h-1zM53 16h2v1h-2zM32 17h1v1h-1zM51 17h1v1h-1zM56 17h1v1h-1zM58 17h2v1h-2zM87 17h1v1h-1zM32 18h2v1h-2zM41 18h1v1h-1zM57 18h2v1h-2zM61 18h1v1h-1zM77 18h1v1h-1zM34 19h1v1h-1zM39 20h1v1h-1zM47 20h1v1h-1zM60 20h1v1h-1zM78 20h1v1h-1zM38 21h1v1h-1zM43 21h1v1h-1zM46 21h2v1h-2zM38 22h2v1h-2zM42 22h1v1h-1zM77 22h1v1h-1zM85 22h1v1h-1zM65 23h1v1h-1zM68 23h1v1h-1zM97 23h1v1h-1zM69 25h3v1h-3zM76 27h1v1h-1zM81 27h1v1h-1zM85 27h1v1h-1zM91 28h1v1h-1zM38 32h1v1h-1zM93 32h1v1h-1zM93 33h1v1h-1zM92 35h1v1h-1zM80 36h1v1h-1zM79 37h1v1h-1zM85 37h2v1h-2zM77 38h1v1h-1zM87 38h1v1h-1zM57 40h2v1h-2zM90 40h1v1h-1zM55 41h1v1h-1zM79 41h1v1h-1zM93 41h1v1h-1zM53 42h1v1h-1zM57 42h1v1h-1zM61 42h1v1h-1zM78 42h2v1h-2zM93 42h1v1h-1zM55 43h1v1h-1zM71 43h2v1h-2zM76 43h1v1h-1zM78 43h2v1h-2zM82 43h1v1h-1zM88 43h1v1h-1zM56 44h1v1h-1zM64 44h1v1h-1zM74 44h1v1h-1zM76 44h1v1h-1zM77 45h1v1h-1zM80 45h1v1h-1zM85 45h1v1h-1zM88 45h1v1h-1zM76 47h2v1h-2zM87 47h1v1h-1zM76 48h1v1h-1zM79 48h1v1h-1zM79 49h1v1h-1zM85 49h1v1h-1zM51 50h1v1h-1zM79 50h1v1h-1zM84 50h2v1h-2zM50 51h1v1h-1zM52 51h1v1h-1zM75 51h1v1h-1zM87 51h1v1h-1zM51 52h1v1h-1zM54 52h1v1h-1zM58 52h1v1h-1zM62 52h1v1h-1zM88 52h1v1h-1zM59 53h1v1h-1zM61 53h1v1h-1zM64 53h1v1h-1zM66 53h1v1h-1zM73 53h1v1h-1zM93 53h4v1h-4zM99 53h1v1h-1zM103 53h1v1h-1zM105 53h1v1h-1zM101 54h1v1h-1zM105 54h1v1h-1z"/><path fill="rgb(155,155,155)" d="M55 0h1v1h-1zM63 1h2v1h-2zM68 2h1v1h-1zM40 9h1v1h-1zM46 9h2v1h-2zM54 9h1v1h-1zM24 10h2v1h-2zM39 10h1v1h-1zM50 10h1v1h-1zM52 10h1v1h-1zM47 11h1v1h-1zM49 11h1v1h-1zM53 11h1v1h-1zM26 12h1v1h-1zM36 12h2v1h-2zM61 12h1v1h-1zM25 13h1v1h-1zM53 13h1v1h-1zM33 14h1v1h-1zM51 14h1v1h-1zM57 14h2v1h-2zM84 14h1v1h-1zM25 15h2v1h-2zM44 15h1v1h-1zM48 15h1v1h-1zM50 15h1v1h-1zM58 15h1v1h-1zM86 15h1v1h-1zM24 16h1v1h-1zM43 16h1v1h-1zM46 16h1v1h-1zM51 16h2v1h-2zM58 16h1v1h-1zM41 17h1v1h-1zM34 18h1v1h-1zM43 18h1v1h-1zM59 18h1v1h-1zM62 18h1v1h-1zM87 18h1v1h-1zM46 19h1v1h-1zM77 19h1v1h-1zM46 20h1v1h-1zM87 20h1v1h-1zM33 21h1v1h-1zM64 21h1v1h-1zM77 21h1v1h-1zM69 23h1v1h-1zM76 23h1v1h-1zM70 24h2v1h-2zM75 26h1v1h-1zM82 27h1v1h-1zM84 27h1v1h-1zM86 27h1v1h-1zM92 28h1v1h-1zM35 31h1v1h-1zM93 35h1v1h-1zM81 36h2v1h-2zM78 37h1v1h-1zM81 37h1v1h-1zM94 37h1v1h-1zM85 38h1v1h-1zM87 39h1v1h-1zM93 39h2v1h-2zM56 40h1v1h-1zM92 40h1v1h-1zM54 41h1v1h-1zM56 41h2v1h-2zM59 41h2v1h-2zM76 41h3v1h-3zM80 41h1v1h-1zM92 41h1v1h-1zM54 42h1v1h-1zM59 42h2v1h-2zM62 42h1v1h-1zM76 42h1v1h-1zM80 42h2v1h-2zM54 43h1v1h-1zM58 43h1v1h-1zM60 43h1v1h-1zM69 43h1v1h-1zM77 43h1v1h-1zM80 43h1v1h-1zM83 43h1v1h-1zM91 43h1v1h-1zM55 44h1v1h-1zM57 44h1v1h-1zM71 44h1v1h-1zM78 44h1v1h-1zM80 44h2v1h-2zM84 44h2v1h-2zM88 44h1v1h-1zM54 45h1v1h-1zM56 45h1v1h-1zM76 45h1v1h-1zM86 45h1v1h-1zM49 46h1v1h-1zM60 47h1v1h-1zM55 49h1v1h-1zM58 49h1v1h-1zM87 49h2v1h-2zM54 50h2v1h-2zM78 50h1v1h-1zM80 50h1v1h-1zM86 50h1v1h-1zM88 50h1v1h-1zM51 51h1v1h-1zM54 51h1v1h-1zM56 51h2v1h-2zM59 51h1v1h-1zM63 51h1v1h-1zM76 51h1v1h-1zM88 51h1v1h-1zM44 52h1v1h-1zM64 52h1v1h-1zM74 52h1v1h-1zM105 52h2v1h-2zM65 53h1v1h-1zM68 53h1v1h-1zM100 53h1v1h-1z"/><path fill="rgb(160,160,160)" d="M49 0h1v1h-1zM28 7h1v1h-1zM41 9h1v1h-1zM49 9h1v1h-1zM51 9h1v1h-1zM24 11h1v1h-1zM29 11h1v1h-1zM37 11h1v1h-1zM56 11h1v1h-1zM27 12h2v1h-2zM35 12h1v1h-1zM49 12h1v1h-1zM27 13h1v1h-1zM35 13h1v1h-1zM55 13h1v1h-1zM26 14h1v1h-1zM34 14h2v1h-2zM80 14h1v1h-1zM24 15h1v1h-1zM29 15h1v1h-1zM31 15h2v1h-2zM49 15h1v1h-1zM31 16h1v1h-1zM44 16h1v1h-1zM59 16h2v1h-2zM72 16h1v1h-1zM42 17h3v1h-3zM57 17h1v1h-1zM72 17h1v1h-1zM87 19h1v1h-1zM63 20h1v1h-1zM37 21h1v1h-1zM39 21h1v1h-1zM87 21h2v1h-2zM86 22h1v1h-1zM79 23h1v1h-1zM21 24h1v1h-1zM72 25h1v1h-1zM74 25h1v1h-1zM76 26h1v1h-1zM79 26h1v1h-1zM77 27h1v1h-1zM89 27h2v1h-2zM95 29h1v1h-1zM93 30h1v1h-1zM93 31h1v1h-1zM102 32h1v1h-1zM93 34h1v1h-1zM94 35h1v1h-1zM83 36h1v1h-1zM84 37h1v1h-1zM78 38h1v1h-1zM84 38h1v1h-1zM86 38h1v1h-1zM78 39h1v1h-1zM88 39h1v1h-1zM78 40h1v1h-1zM58 41h1v1h-1zM58 42h1v1h-1zM94 42h1v1h-1zM61 43h2v1h-2zM67 43h1v1h-1zM70 43h1v1h-1zM53 44h2v1h-2zM79 44h1v1h-1zM51 45h1v1h-1zM57 45h1v1h-1zM87 45h1v1h-1zM89 45h1v1h-1zM88 46h1v1h-1zM61 47h1v1h-1zM62 48h1v1h-1zM57 49h1v1h-1zM59 49h1v1h-1zM75 49h2v1h-2zM80 49h1v1h-1zM86 49h1v1h-1zM50 50h1v1h-1zM63 50h1v1h-1zM48 51h1v1h-1zM55 51h1v1h-1zM89 51h1v1h-1zM55 52h1v1h-1zM91 52h1v1h-1zM96 52h2v1h-2zM104 52h1v1h-1zM71 53h2v1h-2z"/><path fill="rgb(165,165,165)" d="M58 0h1v1h-1zM35 5h1v1h-1zM44 7h1v1h-1zM40 8h2v1h-2zM48 9h1v1h-1zM53 9h1v1h-1zM37 10h2v1h-2zM48 10h1v1h-1zM53 10h1v1h-1zM56 10h1v1h-1zM28 11h1v1h-1zM36 11h1v1h-1zM48 11h1v1h-1zM70 11h1v1h-1zM25 12h1v1h-1zM34 12h1v1h-1zM56 12h1v1h-1zM62 12h1v1h-1zM34 13h1v1h-1zM57 13h1v1h-1zM74 13h1v1h-1zM27 14h1v1h-1zM32 14h1v1h-1zM30 15h1v1h-1zM45 15h1v1h-1zM51 15h1v1h-1zM59 15h1v1h-1zM61 15h1v1h-1zM72 15h1v1h-1zM71 16h1v1h-1zM45 17h1v1h-1zM62 17h1v1h-1zM76 17h1v1h-1zM42 18h1v1h-1zM63 18h1v1h-1zM72 18h2v1h-2zM77 20h1v1h-1zM40 21h1v1h-1zM67 21h2v1h-2zM66 23h2v1h-2zM71 23h1v1h-1zM74 23h1v1h-1zM77 23h1v1h-1zM80 23h1v1h-1zM74 24h2v1h-2zM80 26h1v1h-1zM90 26h1v1h-1zM51 27h1v1h-1zM91 27h1v1h-1zM94 30h1v1h-1zM92 34h1v1h-1zM103 34h1v1h-1zM94 36h1v1h-1zM80 38h2v1h-2zM85 39h1v1h-1zM95 39h2v1h-2zM84 40h3v1h-3zM88 40h2v1h-2zM93 40h1v1h-1zM91 41h1v1h-1zM83 42h2v1h-2zM68 43h1v1h-1zM87 43h1v1h-1zM58 44h1v1h-1zM60 44h1v1h-1zM69 44h2v1h-2zM72 44h2v1h-2zM86 44h1v1h-1zM102 44h1v1h-1zM52 45h2v1h-2zM55 45h1v1h-1zM64 45h1v1h-1zM74 45h1v1h-1zM55 46h2v1h-2zM76 46h1v1h-1zM91 46h1v1h-1zM49 47h2v1h-2zM53 47h1v1h-1zM59 47h1v1h-1zM65 47h1v1h-1zM55 48h1v1h-1zM75 48h1v1h-1zM88 48h1v1h-1zM49 49h1v1h-1zM78 49h1v1h-1zM81 49h1v1h-1zM56 50h1v1h-1zM75 50h1v1h-1zM81 50h1v1h-1zM49 51h1v1h-1zM103 51h1v1h-1zM73 52h1v1h-1zM92 52h1v1h-1zM94 52h1v1h-1zM69 53h2v1h-2z"/><path fill="rgb(170,170,170)" d="M74 4h1v1h-1zM38 6h1v1h-1zM29 7h1v1h-1zM28 8h1v1h-1zM48 8h1v1h-1zM25 9h1v1h-1zM39 9h1v1h-1zM50 9h1v1h-1zM55 9h1v1h-1zM26 10h1v1h-1zM28 10h1v1h-1zM49 10h1v1h-1zM86 11h1v1h-1zM30 12h3v1h-3zM55 12h1v1h-1zM60 12h1v1h-1zM74 12h2v1h-2zM32 13h2v1h-2zM54 13h1v1h-1zM60 13h3v1h-3zM88 13h1v1h-1zM89 14h1v1h-1zM27 15h2v1h-2zM77 15h1v1h-1zM45 16h1v1h-1zM61 16h1v1h-1zM76 16h1v1h-1zM60 17h1v1h-1zM71 17h1v1h-1zM73 17h1v1h-1zM89 18h1v1h-1zM63 19h1v1h-1zM93 19h1v1h-1zM67 20h1v1h-1zM65 21h1v1h-1zM89 21h1v1h-1zM65 22h2v1h-2zM68 22h1v1h-1zM76 22h1v1h-1zM70 23h1v1h-1zM73 23h1v1h-1zM75 23h1v1h-1zM78 23h1v1h-1zM84 23h3v1h-3zM73 24h1v1h-1zM77 26h1v1h-1zM84 26h1v1h-1zM89 26h1v1h-1zM83 27h1v1h-1zM95 28h1v1h-1zM94 31h1v1h-1zM74 34h1v1h-1zM83 37h1v1h-1zM79 38h1v1h-1zM82 38h1v1h-1zM95 38h2v1h-2zM83 39h1v1h-1zM86 39h1v1h-1zM79 40h1v1h-1zM94 40h2v1h-2zM84 41h1v1h-1zM89 41h1v1h-1zM96 41h1v1h-1zM77 42h1v1h-1zM82 42h1v1h-1zM87 42h1v1h-1zM91 42h1v1h-1zM59 43h1v1h-1zM85 43h1v1h-1zM95 43h3v1h-3zM59 44h1v1h-1zM65 44h1v1h-1zM89 44h3v1h-3zM59 45h1v1h-1zM75 45h1v1h-1zM90 45h2v1h-2zM50 46h2v1h-2zM54 46h1v1h-1zM60 46h1v1h-1zM64 46h1v1h-1zM90 46h1v1h-1zM52 47h1v1h-1zM54 47h5v1h-5zM64 47h1v1h-1zM75 47h1v1h-1zM88 47h1v1h-1zM91 47h1v1h-1zM49 48h1v1h-1zM51 48h2v1h-2zM54 48h1v1h-1zM57 48h3v1h-3zM63 48h1v1h-1zM89 48h1v1h-1zM51 49h1v1h-1zM63 49h1v1h-1zM77 49h1v1h-1zM59 50h1v1h-1zM77 50h1v1h-1zM87 50h1v1h-1zM96 50h1v1h-1zM74 51h1v1h-1zM90 51h3v1h-3zM96 51h2v1h-2zM106 51h1v1h-1zM59 52h1v1h-1zM67 52h1v1h-1zM72 52h1v1h-1zM98 52h1v1h-1zM100 52h1v1h-1zM102 53h1v1h-1z"/><path fill="rgb(175,175,175)" d="M34 5h1v1h-1zM36 5h1v1h-1zM37 6h1v1h-1zM44 6h1v1h-1zM33 7h1v1h-1zM43 7h1v1h-1zM45 7h1v1h-1zM46 8h1v1h-1zM26 9h2v1h-2zM37 9h1v1h-1zM81 9h1v1h-1zM29 10h1v1h-1zM70 10h1v1h-1zM25 11h1v1h-1zM30 11h1v1h-1zM35 11h1v1h-1zM61 11h1v1h-1zM29 12h1v1h-1zM33 12h1v1h-1zM70 12h1v1h-1zM31 13h1v1h-1zM75 13h1v1h-1zM28 14h1v1h-1zM62 14h1v1h-1zM74 14h1v1h-1zM78 14h1v1h-1zM88 14h1v1h-1zM60 15h1v1h-1zM62 15h1v1h-1zM62 16h1v1h-1zM73 16h1v1h-1zM61 17h1v1h-1zM70 17h1v1h-1zM74 17h2v1h-2zM88 17h1v1h-1zM91 17h1v1h-1zM64 18h1v1h-1zM76 18h1v1h-1zM90 18h1v1h-1zM92 18h1v1h-1zM73 19h1v1h-1zM76 19h1v1h-1zM66 20h1v1h-1zM68 20h1v1h-1zM89 20h1v1h-1zM66 21h1v1h-1zM76 21h1v1h-1zM95 21h1v1h-1zM70 22h4v1h-4zM75 22h1v1h-1zM87 22h1v1h-1zM89 22h1v1h-1zM96 22h1v1h-1zM82 23h2v1h-2zM63 24h1v1h-1zM72 24h1v1h-1zM83 24h1v1h-1zM85 24h1v1h-1zM91 24h1v1h-1zM75 25h1v1h-1zM92 25h1v1h-1zM97 25h1v1h-1zM78 26h1v1h-1zM85 26h2v1h-2zM91 26h1v1h-1zM92 27h1v1h-1zM43 30h1v1h-1zM95 30h1v1h-1zM95 31h1v1h-1zM52 33h1v1h-1zM82 37h1v1h-1zM95 37h1v1h-1zM83 38h1v1h-1zM97 38h1v1h-1zM81 39h1v1h-1zM98 39h1v1h-1zM80 40h1v1h-1zM87 40h1v1h-1zM81 41h1v1h-1zM88 41h1v1h-1zM94 41h1v1h-1zM85 42h1v1h-1zM88 42h2v1h-2zM96 42h1v1h-1zM84 43h1v1h-1zM61 44h2v1h-2zM66 44h1v1h-1zM68 44h1v1h-1zM100 44h1v1h-1zM60 45h1v1h-1zM63 45h1v1h-1zM52 46h2v1h-2zM57 46h1v1h-1zM59 46h1v1h-1zM61 46h1v1h-1zM67 46h1v1h-1zM75 46h1v1h-1zM89 46h1v1h-1zM51 47h1v1h-1zM67 47h1v1h-1zM90 47h1v1h-1zM50 48h1v1h-1zM56 48h1v1h-1zM61 48h1v1h-1zM64 48h1v1h-1zM90 48h1v1h-1zM54 49h1v1h-1zM56 49h1v1h-1zM60 49h1v1h-1zM74 49h1v1h-1zM91 49h1v1h-1zM48 50h1v1h-1zM89 50h1v1h-1zM91 50h1v1h-1zM62 51h1v1h-1zM68 52h1v1h-1zM95 52h1v1h-1zM103 52h1v1h-1z"/><path fill="rgb(180,180,180)" d="M57 0h1v1h-1zM35 4h1v1h-1zM57 4h1v1h-1zM32 5h1v1h-1zM39 6h1v1h-1zM45 6h1v1h-1zM51 6h1v1h-1zM74 6h1v1h-1zM32 7h1v1h-1zM40 7h1v1h-1zM42 7h1v1h-1zM46 7h1v1h-1zM48 7h2v1h-2zM51 7h2v1h-2zM26 8h1v1h-1zM29 8h1v1h-1zM32 8h2v1h-2zM35 8h1v1h-1zM47 8h1v1h-1zM52 8h1v1h-1zM28 9h1v1h-1zM38 9h1v1h-1zM52 9h1v1h-1zM56 9h1v1h-1zM80 9h1v1h-1zM27 10h1v1h-1zM30 10h1v1h-1zM32 10h1v1h-1zM57 10h1v1h-1zM65 10h1v1h-1zM33 11h1v1h-1zM63 11h1v1h-1zM57 12h1v1h-1zM28 13h1v1h-1zM58 13h1v1h-1zM64 13h1v1h-1zM29 14h1v1h-1zM59 14h3v1h-3zM75 14h1v1h-1zM85 14h1v1h-1zM69 15h1v1h-1zM73 15h1v1h-1zM76 15h1v1h-1zM87 15h1v1h-1zM68 16h2v1h-2zM75 16h1v1h-1zM87 16h2v1h-2zM63 17h1v1h-1zM89 17h1v1h-1zM20 18h1v1h-1zM71 18h1v1h-1zM91 18h1v1h-1zM64 19h1v1h-1zM67 19h1v1h-1zM65 20h1v1h-1zM69 20h1v1h-1zM72 20h1v1h-1zM76 20h1v1h-1zM70 21h2v1h-2zM69 22h1v1h-1zM72 23h1v1h-1zM81 23h1v1h-1zM89 23h1v1h-1zM95 23h1v1h-1zM76 24h1v1h-1zM90 24h1v1h-1zM92 24h1v1h-1zM76 25h1v1h-1zM96 25h1v1h-1zM98 25h1v1h-1zM81 26h1v1h-1zM94 27h1v1h-1zM96 29h1v1h-1zM87 32h1v1h-1zM94 33h1v1h-1zM60 34h1v1h-1zM94 34h1v1h-1zM79 39h2v1h-2zM82 39h1v1h-1zM84 39h1v1h-1zM82 41h2v1h-2zM85 41h3v1h-3zM95 41h1v1h-1zM101 41h1v1h-1zM86 42h1v1h-1zM95 42h1v1h-1zM97 42h1v1h-1zM86 43h1v1h-1zM92 43h1v1h-1zM94 43h1v1h-1zM67 44h1v1h-1zM95 44h1v1h-1zM73 45h1v1h-1zM101 45h2v1h-2zM65 46h1v1h-1zM101 46h1v1h-1zM63 47h1v1h-1zM66 47h1v1h-1zM74 47h1v1h-1zM89 47h1v1h-1zM71 48h1v1h-1zM73 48h2v1h-2zM91 48h1v1h-1zM50 49h1v1h-1zM62 49h1v1h-1zM90 49h1v1h-1zM53 50h1v1h-1zM64 50h1v1h-1zM76 50h1v1h-1zM92 50h2v1h-2zM97 50h1v1h-1zM64 51h1v1h-1zM93 51h1v1h-1zM105 51h1v1h-1zM65 52h1v1h-1zM69 52h3v1h-3zM93 52h1v1h-1z"/><path fill="rgb(185,185,185)" d="M56 0h1v1h-1zM59 2h1v1h-1zM40 3h1v1h-1zM34 4h1v1h-1zM40 4h2v1h-2zM33 5h1v1h-1zM37 5h2v1h-2zM40 5h1v1h-1zM44 5h2v1h-2zM72 5h1v1h-1zM33 6h1v1h-1zM35 6h2v1h-2zM40 6h1v1h-1zM52 6h2v1h-2zM70 6h1v1h-1zM72 6h1v1h-1zM31 7h1v1h-1zM36 7h1v1h-1zM39 7h1v1h-1zM41 7h1v1h-1zM53 7h1v1h-1zM61 7h1v1h-1zM70 7h1v1h-1zM27 8h1v1h-1zM34 8h1v1h-1zM37 8h1v1h-1zM39 8h1v1h-1zM49 8h1v1h-1zM53 8h2v1h-2zM66 8h1v1h-1zM80 8h1v1h-1zM34 9h1v1h-1zM57 9h1v1h-1zM66 9h1v1h-1zM34 10h1v1h-1zM26 11h1v1h-1zM31 11h2v1h-2zM34 11h1v1h-1zM62 11h1v1h-1zM71 11h1v1h-1zM69 12h1v1h-1zM71 12h1v1h-1zM30 13h1v1h-1zM59 13h1v1h-1zM63 13h1v1h-1zM31 14h1v1h-1zM63 14h2v1h-2zM71 14h1v1h-1zM76 14h1v1h-1zM63 15h1v1h-1zM89 15h1v1h-1zM74 16h1v1h-1zM89 16h1v1h-1zM65 17h1v1h-1zM90 17h1v1h-1zM74 18h1v1h-1zM66 19h1v1h-1zM68 19h1v1h-1zM88 19h1v1h-1zM64 20h1v1h-1zM91 20h1v1h-1zM69 21h1v1h-1zM90 21h1v1h-1zM67 22h1v1h-1zM88 22h1v1h-1zM90 22h1v1h-1zM90 23h1v1h-1zM92 23h1v1h-1zM82 24h1v1h-1zM84 24h1v1h-1zM86 24h1v1h-1zM96 24h1v1h-1zM84 25h1v1h-1zM92 26h1v1h-1zM97 26h1v1h-1zM68 27h1v1h-1zM93 27h1v1h-1zM99 27h1v1h-1zM96 30h1v1h-1zM94 32h1v1h-1zM95 36h1v1h-1zM102 38h1v1h-1zM102 39h1v1h-1zM104 39h1v1h-1zM50 40h1v1h-1zM81 40h3v1h-3zM97 40h1v1h-1zM103 40h1v1h-1zM90 41h1v1h-1zM97 41h1v1h-1zM100 41h1v1h-1zM90 42h1v1h-1zM100 42h3v1h-3zM89 43h1v1h-1zM98 43h1v1h-1zM96 44h2v1h-2zM101 44h1v1h-1zM58 45h1v1h-1zM65 45h1v1h-1zM68 45h4v1h-4zM58 46h1v1h-1zM68 46h1v1h-1zM73 46h1v1h-1zM62 47h1v1h-1zM92 47h1v1h-1zM97 47h1v1h-1zM66 48h1v1h-1zM72 48h1v1h-1zM52 49h1v1h-1zM64 49h1v1h-1zM69 49h1v1h-1zM93 49h1v1h-1zM95 49h1v1h-1zM97 49h1v1h-1zM102 49h2v1h-2zM49 50h1v1h-1zM52 50h1v1h-1zM70 50h1v1h-1zM74 50h1v1h-1zM90 50h1v1h-1zM103 50h1v1h-1zM70 51h1v1h-1zM73 51h1v1h-1zM104 51h1v1h-1zM66 52h1v1h-1zM99 52h1v1h-1zM101 52h1v1h-1z"/><path fill="rgb(190,190,190)" d="M61 1h1v1h-1zM41 3h1v1h-1zM67 3h1v1h-1zM31 5h1v1h-1zM57 5h1v1h-1zM61 5h2v1h-2zM34 6h1v1h-1zM43 6h1v1h-1zM56 6h1v1h-1zM62 6h1v1h-1zM71 6h1v1h-1zM73 6h1v1h-1zM35 7h1v1h-1zM37 7h2v1h-2zM50 7h1v1h-1zM71 7h1v1h-1zM36 8h1v1h-1zM38 8h1v1h-1zM55 8h1v1h-1zM57 8h1v1h-1zM29 9h1v1h-1zM33 9h1v1h-1zM35 9h2v1h-2zM31 10h1v1h-1zM33 10h1v1h-1zM35 10h2v1h-2zM62 10h1v1h-1zM66 10h2v1h-2zM81 10h1v1h-1zM83 10h1v1h-1zM57 11h1v1h-1zM65 11h1v1h-1zM74 11h1v1h-1zM81 11h1v1h-1zM63 12h1v1h-1zM69 13h1v1h-1zM82 13h1v1h-1zM85 13h1v1h-1zM70 14h1v1h-1zM72 14h2v1h-2zM87 14h1v1h-1zM71 15h1v1h-1zM74 15h1v1h-1zM63 16h1v1h-1zM65 16h1v1h-1zM70 16h1v1h-1zM65 18h3v1h-3zM88 18h1v1h-1zM22 19h1v1h-1zM65 19h1v1h-1zM69 19h1v1h-1zM89 19h1v1h-1zM91 19h2v1h-2zM71 20h1v1h-1zM92 20h1v1h-1zM94 20h1v1h-1zM72 21h1v1h-1zM75 21h1v1h-1zM91 21h1v1h-1zM74 22h1v1h-1zM91 22h2v1h-2zM91 23h1v1h-1zM94 23h1v1h-1zM96 23h1v1h-1zM77 24h1v1h-1zM93 24h1v1h-1zM97 24h1v1h-1zM90 25h1v1h-1zM83 26h1v1h-1zM97 27h1v1h-1zM96 31h1v1h-1zM61 36h1v1h-1zM96 37h2v1h-2zM104 38h1v1h-1zM97 39h1v1h-1zM96 40h1v1h-1zM98 40h2v1h-2zM104 40h1v1h-1zM98 41h1v1h-1zM103 41h1v1h-1zM98 42h1v1h-1zM99 43h1v1h-1zM101 43h1v1h-1zM98 44h1v1h-1zM61 45h2v1h-2zM92 45h2v1h-2zM100 45h1v1h-1zM103 45h1v1h-1zM105 45h1v1h-1zM74 46h1v1h-1zM95 46h1v1h-1zM68 47h1v1h-1zM71 47h1v1h-1zM53 48h1v1h-1zM65 48h1v1h-1zM68 48h1v1h-1zM70 48h1v1h-1zM53 49h1v1h-1zM70 49h1v1h-1zM92 49h1v1h-1zM104 49h1v1h-1zM62 50h1v1h-1zM95 50h1v1h-1zM104 50h2v1h-2zM98 51h1v1h-1zM102 51h1v1h-1zM61 52h1v1h-1zM102 52h1v1h-1z"/><path fill="rgb(195,195,195)" d="M42 2h1v1h-1zM54 2h1v1h-1zM64 2h1v1h-1zM55 3h1v1h-1zM58 3h1v1h-1zM60 3h1v1h-1zM36 4h2v1h-2zM68 4h1v1h-1zM50 5h2v1h-2zM56 5h1v1h-1zM71 5h1v1h-1zM31 6h2v1h-2zM41 6h1v1h-1zM57 6h1v1h-1zM63 6h1v1h-1zM30 7h1v1h-1zM56 7h1v1h-1zM60 7h1v1h-1zM62 7h2v1h-2zM73 7h2v1h-2zM31 8h1v1h-1zM50 8h2v1h-2zM56 8h1v1h-1zM30 9h1v1h-1zM32 9h1v1h-1zM58 9h1v1h-1zM61 9h1v1h-1zM65 9h1v1h-1zM70 9h1v1h-1zM58 10h1v1h-1zM63 10h1v1h-1zM71 10h1v1h-1zM80 10h1v1h-1zM59 11h2v1h-2zM64 11h1v1h-1zM67 11h1v1h-1zM69 11h1v1h-1zM73 11h1v1h-1zM83 11h1v1h-1zM29 13h1v1h-1zM70 13h2v1h-2zM73 13h1v1h-1zM77 14h1v1h-1zM64 15h1v1h-1zM88 15h1v1h-1zM66 16h1v1h-1zM90 16h1v1h-1zM64 17h1v1h-1zM48 18h1v1h-1zM68 18h1v1h-1zM75 18h1v1h-1zM70 19h1v1h-1zM72 19h1v1h-1zM74 19h2v1h-2zM70 20h1v1h-1zM73 20h1v1h-1zM75 20h1v1h-1zM90 20h1v1h-1zM93 20h1v1h-1zM73 21h1v1h-1zM92 21h1v1h-1zM94 21h1v1h-1zM94 22h1v1h-1zM87 23h2v1h-2zM93 23h1v1h-1zM87 24h1v1h-1zM89 24h1v1h-1zM94 24h2v1h-2zM82 25h1v1h-1zM85 25h1v1h-1zM91 25h1v1h-1zM95 25h1v1h-1zM93 26h1v1h-1zM96 26h1v1h-1zM98 26h1v1h-1zM96 27h1v1h-1zM96 28h1v1h-1zM100 30h1v1h-1zM100 31h1v1h-1zM96 32h1v1h-1zM95 35h1v1h-1zM103 39h1v1h-1zM101 40h1v1h-1zM102 41h1v1h-1zM93 43h1v1h-1zM100 43h1v1h-1zM102 43h1v1h-1zM94 44h1v1h-1zM99 44h1v1h-1zM103 44h1v1h-1zM67 45h1v1h-1zM97 45h1v1h-1zM62 46h1v1h-1zM66 46h1v1h-1zM92 46h1v1h-1zM94 46h1v1h-1zM104 46h2v1h-2zM70 47h1v1h-1zM72 47h1v1h-1zM102 47h1v1h-1zM67 48h1v1h-1zM69 48h1v1h-1zM92 48h1v1h-1zM94 48h1v1h-1zM101 48h3v1h-3zM105 49h2v1h-2zM60 50h1v1h-1zM94 50h1v1h-1zM102 50h1v1h-1zM106 50h1v1h-1zM60 51h1v1h-1zM68 51h2v1h-2zM94 51h2v1h-2z"/><path fill="rgb(200,200,200)" d="M46 1h1v1h-1zM47 2h1v1h-1zM47 3h1v1h-1zM54 3h1v1h-1zM42 4h1v1h-1zM45 4h1v1h-1zM58 4h1v1h-1zM67 4h1v1h-1zM39 5h1v1h-1zM46 5h1v1h-1zM73 5h1v1h-1zM30 6h1v1h-1zM42 6h1v1h-1zM46 6h1v1h-1zM48 6h1v1h-1zM54 6h1v1h-1zM60 6h2v1h-2zM64 6h2v1h-2zM34 7h1v1h-1zM54 7h1v1h-1zM65 7h1v1h-1zM72 7h1v1h-1zM69 8h1v1h-1zM79 8h1v1h-1zM76 9h2v1h-2zM79 9h1v1h-1zM72 10h1v1h-1zM78 10h2v1h-2zM82 10h1v1h-1zM68 11h1v1h-1zM78 11h1v1h-1zM59 12h1v1h-1zM64 12h1v1h-1zM68 12h1v1h-1zM73 12h1v1h-1zM81 12h2v1h-2zM65 13h1v1h-1zM83 13h1v1h-1zM65 14h1v1h-1zM69 14h1v1h-1zM66 17h1v1h-1zM69 17h1v1h-1zM70 18h1v1h-1zM71 19h1v1h-1zM78 24h4v1h-4zM77 25h1v1h-1zM87 25h2v1h-2zM93 25h2v1h-2zM82 26h1v1h-1zM94 26h2v1h-2zM95 27h1v1h-1zM100 29h1v1h-1zM99 30h1v1h-1zM101 31h1v1h-1zM95 32h1v1h-1zM97 32h1v1h-1zM100 32h2v1h-2zM101 33h2v1h-2zM95 34h1v1h-1zM96 36h1v1h-1zM100 37h1v1h-1zM98 38h3v1h-3zM103 38h1v1h-1zM99 39h1v1h-1zM104 41h1v1h-1zM103 42h1v1h-1zM105 44h1v1h-1zM94 45h2v1h-2zM98 45h1v1h-1zM63 46h1v1h-1zM93 46h1v1h-1zM96 46h5v1h-5zM103 46h1v1h-1zM96 47h1v1h-1zM100 47h2v1h-2zM93 48h1v1h-1zM96 48h3v1h-3zM61 49h1v1h-1zM68 49h1v1h-1zM71 49h2v1h-2zM96 49h1v1h-1zM99 49h3v1h-3zM69 50h1v1h-1zM73 50h1v1h-1zM98 50h1v1h-1zM67 51h1v1h-1zM72 51h1v1h-1zM100 51h2v1h-2z"/><path fill="rgb(205,205,205)" d="M54 1h2v1h-2zM59 1h1v1h-1zM55 2h1v1h-1zM60 2h1v1h-1zM63 2h1v1h-1zM65 2h1v1h-1zM36 3h1v1h-1zM42 3h1v1h-1zM51 3h1v1h-1zM59 3h1v1h-1zM61 3h1v1h-1zM66 3h1v1h-1zM51 4h1v1h-1zM60 4h1v1h-1zM71 4h2v1h-2zM41 5h2v1h-2zM53 5h1v1h-1zM58 5h1v1h-1zM60 5h1v1h-1zM68 5h2v1h-2zM49 6h1v1h-1zM55 6h1v1h-1zM68 6h2v1h-2zM47 7h1v1h-1zM57 7h1v1h-1zM60 8h3v1h-3zM68 8h1v1h-1zM71 8h1v1h-1zM75 8h2v1h-2zM31 9h1v1h-1zM67 9h1v1h-1zM69 9h1v1h-1zM75 9h1v1h-1zM78 9h1v1h-1zM59 10h1v1h-1zM69 10h1v1h-1zM73 10h2v1h-2zM58 11h1v1h-1zM66 11h1v1h-1zM72 11h1v1h-1zM75 11h1v1h-1zM77 11h1v1h-1zM82 11h1v1h-1zM84 11h1v1h-1zM58 12h1v1h-1zM65 12h1v1h-1zM76 12h1v1h-1zM78 12h1v1h-1zM43 13h1v1h-1zM68 13h1v1h-1zM79 13h1v1h-1zM87 13h1v1h-1zM68 14h1v1h-1zM65 15h1v1h-1zM64 16h1v1h-1zM67 16h1v1h-1zM68 17h1v1h-1zM69 18h1v1h-1zM90 19h1v1h-1zM74 20h1v1h-1zM74 21h1v1h-1zM93 21h1v1h-1zM79 25h1v1h-1zM98 27h1v1h-1zM98 28h1v1h-1zM97 30h2v1h-2zM95 33h2v1h-2zM99 36h1v1h-1zM101 36h1v1h-1zM99 37h1v1h-1zM100 40h1v1h-1zM99 42h1v1h-1zM93 44h1v1h-1zM72 45h1v1h-1zM96 45h1v1h-1zM99 45h1v1h-1zM69 46h3v1h-3zM69 47h1v1h-1zM93 47h2v1h-2zM98 47h1v1h-1zM95 48h1v1h-1zM99 48h2v1h-2zM104 48h1v1h-1zM65 49h1v1h-1zM67 49h1v1h-1zM73 49h1v1h-1zM98 49h1v1h-1zM61 50h1v1h-1zM99 50h1v1h-1zM101 50h1v1h-1zM61 51h1v1h-1zM71 51h1v1h-1zM99 51h1v1h-1z"/><path fill="rgb(210,210,210)" d="M45 1h1v1h-1zM50 1h2v1h-2zM58 1h1v1h-1zM60 1h1v1h-1zM62 1h1v1h-1zM39 2h3v1h-3zM43 2h1v1h-1zM46 2h1v1h-1zM58 2h1v1h-1zM61 2h1v1h-1zM66 2h2v1h-2zM37 3h1v1h-1zM53 3h1v1h-1zM68 3h1v1h-1zM38 4h2v1h-2zM43 4h2v1h-2zM47 4h1v1h-1zM52 4h1v1h-1zM59 4h1v1h-1zM63 4h1v1h-1zM43 5h1v1h-1zM52 5h1v1h-1zM63 5h1v1h-1zM47 6h1v1h-1zM67 6h1v1h-1zM64 7h1v1h-1zM66 7h1v1h-1zM68 7h2v1h-2zM77 7h1v1h-1zM79 7h1v1h-1zM72 8h1v1h-1zM60 9h1v1h-1zM62 9h1v1h-1zM71 9h1v1h-1zM74 9h1v1h-1zM82 9h1v1h-1zM61 10h1v1h-1zM75 10h1v1h-1zM80 11h1v1h-1zM66 12h2v1h-2zM80 12h1v1h-1zM83 12h1v1h-1zM67 13h1v1h-1zM72 13h1v1h-1zM76 13h1v1h-1zM80 13h2v1h-2zM86 13h1v1h-1zM27 16h1v1h-1zM59 21h1v1h-1zM78 25h1v1h-1zM97 29h1v1h-1zM99 31h1v1h-1zM100 36h1v1h-1zM102 37h1v1h-1zM100 39h1v1h-1zM99 41h1v1h-1zM104 45h1v1h-1zM73 47h1v1h-1zM103 47h2v1h-2zM106 47h1v1h-1zM105 48h2v1h-2zM68 50h1v1h-1zM71 50h1v1h-1zM100 50h1v1h-1z"/><path fill="rgb(215,215,215)" d="M47 1h1v1h-1zM53 1h1v1h-1zM38 3h1v1h-1zM50 3h1v1h-1zM57 3h1v1h-1zM62 3h1v1h-1zM70 3h1v1h-1zM53 4h1v1h-1zM55 4h2v1h-2zM61 4h2v1h-2zM47 5h1v1h-1zM55 5h1v1h-1zM59 5h1v1h-1zM67 5h1v1h-1zM74 5h2v1h-2zM59 6h1v1h-1zM55 7h1v1h-1zM59 7h1v1h-1zM67 7h1v1h-1zM59 8h1v1h-1zM63 8h1v1h-1zM65 8h1v1h-1zM67 8h1v1h-1zM70 8h1v1h-1zM74 8h1v1h-1zM77 8h1v1h-1zM63 9h1v1h-1zM73 9h1v1h-1zM64 10h1v1h-1zM68 10h1v1h-1zM76 10h2v1h-2zM76 11h1v1h-1zM85 11h1v1h-1zM72 12h1v1h-1zM84 12h1v1h-1zM66 13h1v1h-1zM84 13h1v1h-1zM43 14h1v1h-1zM66 14h1v1h-1zM66 15h1v1h-1zM68 15h1v1h-1zM50 17h1v1h-1zM93 22h1v1h-1zM80 25h2v1h-2zM86 25h1v1h-1zM97 28h1v1h-1zM99 28h1v1h-1zM98 29h2v1h-2zM97 31h1v1h-1zM98 32h2v1h-2zM96 34h1v1h-1zM101 34h1v1h-1zM96 35h1v1h-1zM97 36h1v1h-1zM98 37h1v1h-1zM103 43h1v1h-1zM104 44h1v1h-1zM66 45h1v1h-1zM72 46h1v1h-1zM99 47h1v1h-1zM66 49h1v1h-1zM65 51h2v1h-2z"/><path fill="rgb(220,220,220)" d="M44 1h1v1h-1zM52 1h1v1h-1zM50 2h1v1h-1zM56 2h1v1h-1zM62 2h1v1h-1zM45 3h2v1h-2zM52 3h1v1h-1zM63 3h1v1h-1zM69 3h1v1h-1zM46 4h1v1h-1zM50 4h1v1h-1zM69 4h2v1h-2zM70 5h1v1h-1zM77 6h1v1h-1zM58 7h1v1h-1zM75 7h1v1h-1zM58 8h1v1h-1zM73 8h1v1h-1zM68 9h1v1h-1zM60 10h1v1h-1zM79 11h1v1h-1zM77 13h2v1h-2zM88 24h1v1h-1zM98 31h1v1h-1zM99 33h1v1h-1zM102 34h1v1h-1zM103 37h1v1h-1z"/><path fill="rgb(225,225,225)" d="M45 2h1v1h-1zM51 2h3v1h-3zM57 2h1v1h-1zM39 3h1v1h-1zM43 3h2v1h-2zM48 3h2v1h-2zM56 3h1v1h-1zM65 3h1v1h-1zM66 4h1v1h-1zM54 5h1v1h-1zM65 5h1v1h-1zM58 6h1v1h-1zM66 6h1v1h-1zM75 6h1v1h-1zM42 8h1v1h-1zM64 8h1v1h-1zM59 9h1v1h-1zM72 9h1v1h-1zM79 12h1v1h-1zM86 12h1v1h-1zM62 19h1v1h-1zM97 33h2v1h-2zM100 33h1v1h-1zM97 35h1v1h-1zM101 35h3v1h-3zM105 41h1v1h-1zM105 47h1v1h-1zM65 50h1v1h-1zM67 50h1v1h-1z"/><path fill="rgb(230,230,230)" d="M57 1h1v1h-1zM48 2h1v1h-1zM64 3h1v1h-1zM48 4h1v1h-1zM54 4h1v1h-1zM64 4h1v1h-1zM48 5h1v1h-1zM64 5h1v1h-1zM76 7h1v1h-1zM78 7h1v1h-1zM78 8h1v1h-1zM77 12h1v1h-1zM85 12h1v1h-1zM67 14h1v1h-1zM67 15h1v1h-1zM97 34h1v1h-1zM99 34h1v1h-1zM98 35h3v1h-3zM102 36h1v1h-1zM104 42h2v1h-2zM104 43h1v1h-1zM72 50h1v1h-1z"/><path fill="rgb(235,235,235)" d="M48 1h2v1h-2zM44 2h1v1h-1zM49 2h1v1h-1zM49 4h1v1h-1zM66 5h1v1h-1zM27 11h1v1h-1zM30 14h1v1h-1zM86 14h1v1h-1zM70 15h1v1h-1zM95 22h1v1h-1zM83 25h1v1h-1zM89 25h1v1h-1zM98 34h1v1h-1zM100 34h1v1h-1zM98 36h1v1h-1zM103 36h1v1h-1zM101 37h1v1h-1zM101 39h1v1h-1zM102 40h1v1h-1zM105 43h1v1h-1zM102 46h1v1h-1zM60 48h1v1h-1zM89 49h1v1h-1zM94 49h1v1h-1zM66 50h1v1h-1z"/><path fill="rgb(240,240,240)" d="M56 1h1v1h-1zM65 4h1v1h-1zM49 5h1v1h-1zM76 6h1v1h-1zM64 9h1v1h-1z"/></svg>
</div>
<div id="chat">
  <div id="prompt">Draw the moon in pixel art</div>
  <div id="plus"><svg style="position:absolute;left:25px;top:25px" width="34" height="34" viewBox="0 0 34 34"><path d="M17 2 V32 M2 17 H32" stroke="#1a1a1a" stroke-width="3.2" stroke-linecap="round"/></svg></div>
  <div id="pill"><svg style="position:absolute;left:29px;top:24px" width="32" height="38" viewBox="0 0 32 38" fill="none"><path d="M6 2.5 H18.5 L28.5 12.5 V31 A4.5 4.5 0 0 1 24 35.5 H6 A4.5 4.5 0 0 1 1.5 31 V7 A4.5 4.5 0 0 1 6 2.5 Z" stroke="#2f7fe0" stroke-width="3.2" stroke-linejoin="round"/><path d="M18 2.5 V9 A3.5 3.5 0 0 0 21.5 12.5 H28.5" stroke="#2f7fe0" stroke-width="3.2" stroke-linejoin="round"/><path d="M8 21 H14 M8 28 H21" stroke="#2f7fe0" stroke-width="3.2" stroke-linecap="round"/></svg><div class="t" id="agent" style="left:75px;top:26.5px;font-size:33px;line-height:33px;color:#2f7fe0;-webkit-text-stroke:0.4px #e3effc;">Agent</div><div style="position:absolute;left:176.5px;top:26px;width:1.6px;height:32px;background:#3b86e3;"></div><div class="t" id="sheets" style="left:184px;top:26.5px;font-size:33px;line-height:33px;color:#2f7fe0;-webkit-text-stroke:0.4px #e3effc;">Sheets</div></div>
  <div id="send"><svg style="position:absolute;left:22px;top:22px" width="42" height="42" viewBox="0 0 42 42" fill="none"><path d="M21 37.5 V6 M9.5 17 L21 5.5 L32.5 17" stroke="#e6e6e6" stroke-width="5" stroke-linecap="round" stroke-linejoin="round"/></svg></div>
</div>
</body></html>
